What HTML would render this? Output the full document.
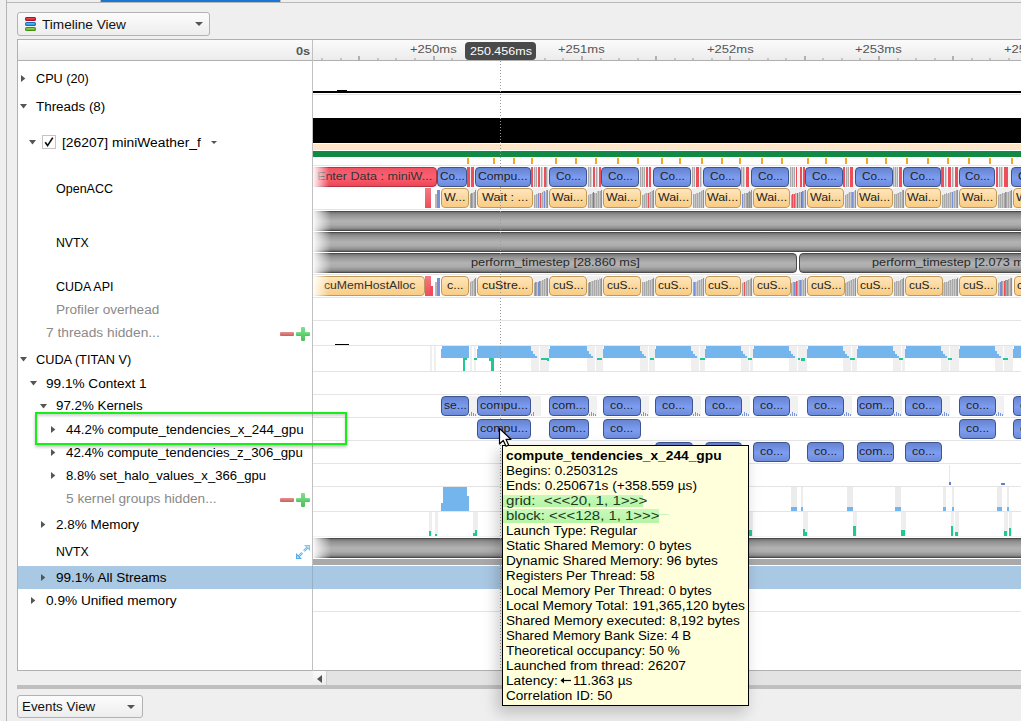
<!DOCTYPE html>
<html><head><meta charset="utf-8"><style>
html,body{margin:0;padding:0;width:1021px;height:721px;overflow:hidden;background:#efefef}
body{position:relative;font-family:'Liberation Sans', sans-serif}
div{position:absolute;box-sizing:border-box}
.t{white-space:pre;transform-origin:0 0}
</style></head><body>
<div style="left:0px;top:0px;width:1021px;height:721px;background:#efefef"></div>
<div style="left:6px;top:0px;width:1px;height:721px;background:#b4b4b4"></div>
<div style="left:7px;top:2px;width:1014px;height:1px;background:#b9b9b9"></div>
<div style="left:100px;top:0px;width:181px;height:2px;background:#1976d2"></div>
<div style="left:100px;top:0px;width:1px;height:3px;background:#b9b9b9"></div>
<div style="left:280px;top:0px;width:1px;height:3px;background:#b9b9b9"></div>
<div style="left:17px;top:12px;width:193px;height:24px;box-sizing:border-box;border:1px solid #b2b2b2;border-radius:3px;background:linear-gradient(#fcfcfc,#ededed)"></div>
<div style="left:25px;top:17px;width:12px;height:15px"><div style="left:0;top:0;width:11px;height:4px;border-radius:2px;background:linear-gradient(#f0606a,#d4101e);box-shadow:inset 0 0 0 1px #b01020"></div><div style="left:0;top:5px;width:11px;height:4px;border-radius:2px;background:linear-gradient(#70c8f0,#1a8ad8);box-shadow:inset 0 0 0 1px #1070b8"></div><div style="left:0;top:10px;width:11px;height:4px;border-radius:2px;background:linear-gradient(#a8e070,#50a820);box-shadow:inset 0 0 0 1px #409010"></div></div>
<div class="t" style="left:42.00px;top:19px;font-size:12px;line-height:12px;color:#111;transform:scaleX(1.1339);">Timeline View</div>
<div style="left:195px;top:22px;width:0;height:0;border-left:4px solid transparent;border-right:4px solid transparent;border-top:4px solid #555"></div>
<div style="left:17px;top:39px;width:1004px;height:632px;box-sizing:border-box;border:1px solid #b0b0b0;border-right:none;background:#fff"></div>
<div style="left:18px;top:40px;width:1003px;height:20px;background:linear-gradient(#fbfbfb,#ececec)"></div>
<div style="left:17px;top:60px;width:1004px;height:1px;background:#b0b0b0"></div>
<div style="left:312px;top:40px;width:1px;height:631px;background:#c0c0c0"></div>
<div class="t" style="left:295.80px;top:46px;font-size:11px;line-height:11px;color:#555;font-weight:bold;transform:scaleX(1.1593);">0s</div>
<div style="left:321px;top:58px;width:2px;height:2px;background:#c4c4c4"></div>
<div style="left:340px;top:58px;width:2px;height:2px;background:#c4c4c4"></div>
<div style="left:358px;top:56px;width:2px;height:4px;background:#b0b0b0"></div>
<div style="left:377px;top:58px;width:2px;height:2px;background:#c4c4c4"></div>
<div style="left:395px;top:58px;width:2px;height:2px;background:#c4c4c4"></div>
<div style="left:414px;top:58px;width:2px;height:2px;background:#c4c4c4"></div>
<div style="left:433px;top:56px;width:2px;height:4px;background:#b0b0b0"></div>
<div style="left:451px;top:58px;width:2px;height:2px;background:#c4c4c4"></div>
<div style="left:470px;top:58px;width:2px;height:2px;background:#c4c4c4"></div>
<div style="left:488px;top:58px;width:2px;height:2px;background:#c4c4c4"></div>
<div style="left:507px;top:56px;width:2px;height:4px;background:#b0b0b0"></div>
<div style="left:525px;top:58px;width:2px;height:2px;background:#c4c4c4"></div>
<div style="left:544px;top:58px;width:2px;height:2px;background:#c4c4c4"></div>
<div style="left:562px;top:58px;width:2px;height:2px;background:#c4c4c4"></div>
<div style="left:581px;top:56px;width:2px;height:4px;background:#b0b0b0"></div>
<div style="left:600px;top:58px;width:2px;height:2px;background:#c4c4c4"></div>
<div style="left:618px;top:58px;width:2px;height:2px;background:#c4c4c4"></div>
<div style="left:637px;top:58px;width:2px;height:2px;background:#c4c4c4"></div>
<div style="left:655px;top:56px;width:2px;height:4px;background:#b0b0b0"></div>
<div style="left:674px;top:58px;width:2px;height:2px;background:#c4c4c4"></div>
<div style="left:692px;top:58px;width:2px;height:2px;background:#c4c4c4"></div>
<div style="left:711px;top:58px;width:2px;height:2px;background:#c4c4c4"></div>
<div style="left:729px;top:56px;width:2px;height:4px;background:#b0b0b0"></div>
<div style="left:748px;top:58px;width:2px;height:2px;background:#c4c4c4"></div>
<div style="left:767px;top:58px;width:2px;height:2px;background:#c4c4c4"></div>
<div style="left:785px;top:58px;width:2px;height:2px;background:#c4c4c4"></div>
<div style="left:804px;top:56px;width:2px;height:4px;background:#b0b0b0"></div>
<div style="left:822px;top:58px;width:2px;height:2px;background:#c4c4c4"></div>
<div style="left:841px;top:58px;width:2px;height:2px;background:#c4c4c4"></div>
<div style="left:859px;top:58px;width:2px;height:2px;background:#c4c4c4"></div>
<div style="left:878px;top:56px;width:2px;height:4px;background:#b0b0b0"></div>
<div style="left:897px;top:58px;width:2px;height:2px;background:#c4c4c4"></div>
<div style="left:915px;top:58px;width:2px;height:2px;background:#c4c4c4"></div>
<div style="left:934px;top:58px;width:2px;height:2px;background:#c4c4c4"></div>
<div style="left:952px;top:56px;width:2px;height:4px;background:#b0b0b0"></div>
<div style="left:971px;top:58px;width:2px;height:2px;background:#c4c4c4"></div>
<div style="left:989px;top:58px;width:2px;height:2px;background:#c4c4c4"></div>
<div style="left:1008px;top:58px;width:2px;height:2px;background:#c4c4c4"></div>
<div class="t" style="left:409.67px;top:44px;font-size:11px;line-height:11px;color:#555;transform:scaleX(1.1826);">+250ms</div>
<div class="t" style="left:558.17px;top:44px;font-size:11px;line-height:11px;color:#555;transform:scaleX(1.1826);">+251ms</div>
<div class="t" style="left:706.67px;top:44px;font-size:11px;line-height:11px;color:#555;transform:scaleX(1.1826);">+252ms</div>
<div class="t" style="left:855.17px;top:44px;font-size:11px;line-height:11px;color:#555;transform:scaleX(1.1826);">+253ms</div>
<div class="t" style="left:1003.67px;top:44px;font-size:11px;line-height:11px;color:#555;transform:scaleX(1.1826);">+254ms</div>
<div style="left:465px;top:42px;width:71px;height:18px;background:#4a4a4a;border-radius:4px"></div>
<div class="t" style="left:469.53px;top:46px;font-size:11px;line-height:11px;color:#fff;transform:scaleX(1.1377);">250.456ms</div>
<svg style="position:absolute;left:21px;top:75px" width="6" height="8"><path d="M0 0 L4.3 3.5 L0 7 Z" fill="#555"/></svg>
<div class="t" style="left:36.00px;top:73px;font-size:12px;line-height:12px;color:#000;transform:scaleX(1.0566);">CPU (20)</div>
<svg style="position:absolute;left:20px;top:104px" width="8" height="6"><path d="M0 0 L7 0 L3.5 4.5 Z" fill="#555"/></svg>
<div class="t" style="left:36.00px;top:101px;font-size:12px;line-height:12px;color:#000;transform:scaleX(1.1170);">Threads (8)</div>
<svg style="position:absolute;left:29px;top:140px" width="8" height="6"><path d="M0 0 L7 0 L3.5 4.5 Z" fill="#555"/></svg>
<div style="left:42px;top:135px;width:14px;height:14px;border:1px solid #c4c4c4;background:#fff"></div>
<svg style="position:absolute;left:43px;top:136px" width="12" height="12"><path d="M2.2 6.2 L4.6 9.6 L9.8 1.6" fill="none" stroke="#111" stroke-width="1.7"/></svg>
<div class="t" style="left:62.00px;top:137px;font-size:12px;line-height:12px;color:#000;transform:scaleX(1.1514);">[26207] miniWeather_f</div>
<div style="left:211px;top:141px;width:0;height:0;border-left:3px solid transparent;border-right:3px solid transparent;border-top:3px solid #555"></div>
<div class="t" style="left:56.00px;top:183px;font-size:12px;line-height:12px;color:#000;transform:scaleX(1.0423);">OpenACC</div>
<div class="t" style="left:56.00px;top:237px;font-size:12px;line-height:12px;color:#000;transform:scaleX(1.0225);">NVTX</div>
<div class="t" style="left:56.00px;top:281px;font-size:12px;line-height:12px;color:#000;transform:scaleX(1.0370);">CUDA API</div>
<div class="t" style="left:56.00px;top:304px;font-size:12px;line-height:12px;color:#8a8a8a;transform:scaleX(1.1298);">Profiler overhead</div>
<div class="t" style="left:46.00px;top:327px;font-size:12px;line-height:12px;color:#8a8a8a;transform:scaleX(1.1440);">7 threads hidden...</div>
<div style="left:280px;top:332px;width:14px;height:4px;background:linear-gradient(#e89090,#c86060);border-radius:1px"></div>
<div style="left:296px;top:332px;width:14px;height:4px;background:linear-gradient(#80e090,#48c058);border-radius:1px"></div>
<div style="left:301px;top:327px;width:4px;height:14px;background:linear-gradient(#80e090,#48c058);border-radius:1px"></div>
<svg style="position:absolute;left:20px;top:357px" width="8" height="6"><path d="M0 0 L7 0 L3.5 4.5 Z" fill="#555"/></svg>
<div class="t" style="left:36.00px;top:354px;font-size:12px;line-height:12px;color:#000;transform:scaleX(1.0603);">CUDA (TITAN V)</div>
<svg style="position:absolute;left:30px;top:381px" width="8" height="6"><path d="M0 0 L7 0 L3.5 4.5 Z" fill="#555"/></svg>
<div class="t" style="left:46.00px;top:378px;font-size:12px;line-height:12px;color:#000;transform:scaleX(1.1338);">99.1% Context 1</div>
<svg style="position:absolute;left:40px;top:404px" width="8" height="6"><path d="M0 0 L7 0 L3.5 4.5 Z" fill="#555"/></svg>
<div class="t" style="left:56.00px;top:400px;font-size:12px;line-height:12px;color:#000;transform:scaleX(1.1108);">97.2% Kernels</div>
<svg style="position:absolute;left:51px;top:426px" width="6" height="8"><path d="M0 0 L4.3 3.5 L0 7 Z" fill="#555"/></svg>
<div class="t" style="left:66.00px;top:424px;font-size:12px;line-height:12px;color:#000;transform:scaleX(1.1093);">44.2% compute_tendencies_x_244_gpu</div>
<svg style="position:absolute;left:51px;top:449px" width="6" height="8"><path d="M0 0 L4.3 3.5 L0 7 Z" fill="#555"/></svg>
<div class="t" style="left:66.00px;top:447px;font-size:12px;line-height:12px;color:#000;transform:scaleX(1.1056);">42.4% compute_tendencies_z_306_gpu</div>
<svg style="position:absolute;left:51px;top:472px" width="6" height="8"><path d="M0 0 L4.3 3.5 L0 7 Z" fill="#555"/></svg>
<div class="t" style="left:66.00px;top:470px;font-size:12px;line-height:12px;color:#000;transform:scaleX(1.0908);">8.8% set_halo_values_x_366_gpu</div>
<div class="t" style="left:66.00px;top:493px;font-size:12px;line-height:12px;color:#8a8a8a;transform:scaleX(1.1404);">5 kernel groups hidden...</div>
<div style="left:280px;top:498px;width:14px;height:4px;background:linear-gradient(#e89090,#c86060);border-radius:1px"></div>
<div style="left:296px;top:498px;width:14px;height:4px;background:linear-gradient(#80e090,#48c058);border-radius:1px"></div>
<div style="left:301px;top:493px;width:4px;height:14px;background:linear-gradient(#80e090,#48c058);border-radius:1px"></div>
<svg style="position:absolute;left:41px;top:521px" width="6" height="8"><path d="M0 0 L4.3 3.5 L0 7 Z" fill="#555"/></svg>
<div class="t" style="left:56.00px;top:519px;font-size:12px;line-height:12px;color:#000;transform:scaleX(1.1225);">2.8% Memory</div>
<div class="t" style="left:56.00px;top:546px;font-size:12px;line-height:12px;color:#000;transform:scaleX(1.0225);">NVTX</div>
<svg style="position:absolute;left:294px;top:543px" width="18" height="18"><g stroke="#62b6ec" stroke-width="2.4" stroke-linecap="butt"><path d="M3.5 14.5 L8.2 9.8"/><path d="M10 8 L14.5 3.5"/></g><g stroke="#b4e2fa" stroke-width="0.9"><path d="M3.5 14.5 L8.2 9.8"/><path d="M10 8 L14.5 3.5"/></g><path d="M2 16 L2 10 L8 16 Z" fill="#56aee8"/><path d="M16 2 L10 2 L16 8 Z" fill="#7cc6f2"/><path d="M3 15 L3 12.5 L5.5 15 Z" fill="#a8dcf8"/><path d="M15 3 L12.5 3 L15 5.5 Z" fill="#c4e8fb"/></svg>
<div style="left:18px;top:566px;width:1003px;height:23px;background:#a9c8e3"></div>
<div style="left:312px;top:566px;width:1px;height:23px;background:#98b0c6"></div>
<svg style="position:absolute;left:41px;top:574px" width="6" height="8"><path d="M0 0 L4.3 3.5 L0 7 Z" fill="#555"/></svg>
<div class="t" style="left:56.00px;top:572px;font-size:12px;line-height:12px;color:#000;transform:scaleX(1.1276);">99.1% All Streams</div>
<svg style="position:absolute;left:31px;top:597px" width="6" height="8"><path d="M0 0 L4.3 3.5 L0 7 Z" fill="#555"/></svg>
<div class="t" style="left:46.00px;top:595px;font-size:12px;line-height:12px;color:#000;transform:scaleX(1.1379);">0.9% Unified memory</div>
<div style="left:0;top:0;width:1021px;height:721px;clip-path:inset(61px 0 50px 313px)">
<div style="left:313px;top:94px;width:708px;height:1px;background:#e4e4e4"></div>
<div style="left:313px;top:165px;width:708px;height:1px;background:#e4e4e4"></div>
<div style="left:313px;top:209px;width:708px;height:1px;background:#e4e4e4"></div>
<div style="left:313px;top:274px;width:708px;height:1px;background:#e4e4e4"></div>
<div style="left:313px;top:297px;width:708px;height:1px;background:#e4e4e4"></div>
<div style="left:313px;top:320px;width:708px;height:1px;background:#e4e4e4"></div>
<div style="left:313px;top:345px;width:708px;height:1px;background:#e4e4e4"></div>
<div style="left:313px;top:371px;width:708px;height:1px;background:#e4e4e4"></div>
<div style="left:313px;top:394px;width:708px;height:1px;background:#e4e4e4"></div>
<div style="left:313px;top:417px;width:708px;height:1px;background:#e4e4e4"></div>
<div style="left:313px;top:440px;width:708px;height:1px;background:#e4e4e4"></div>
<div style="left:313px;top:463px;width:708px;height:1px;background:#e4e4e4"></div>
<div style="left:313px;top:486px;width:708px;height:1px;background:#e4e4e4"></div>
<div style="left:313px;top:511px;width:708px;height:1px;background:#e4e4e4"></div>
<div style="left:313px;top:611px;width:708px;height:1px;background:#e4e4e4"></div>
<div style="left:313px;top:536px;width:708px;height:1px;background:#f4f4f4"></div>
<div style="left:313px;top:91px;width:708px;height:2px;background:#000"></div>
<div style="left:337px;top:90px;width:10px;height:1px;background:#000"></div>
<div style="left:313px;top:118px;width:708px;height:25px;background:#000"></div>
<div style="left:313px;top:144px;width:708px;height:6px;background:#fde6c8"></div>
<div style="left:313px;top:151px;width:708px;height:6px;background:#138a43"></div>
<div style="left:467px;top:158px;width:2px;height:6px;background:#f5a623"></div>
<div style="left:493px;top:158px;width:2px;height:6px;background:#f5a623"></div>
<div style="left:513px;top:158px;width:2px;height:6px;background:#f5a623"></div>
<div style="left:531px;top:158px;width:2px;height:6px;background:#f5a623"></div>
<div style="left:555px;top:158px;width:2px;height:6px;background:#f5a623"></div>
<div style="left:575px;top:158px;width:2px;height:6px;background:#f5a623"></div>
<div style="left:595px;top:158px;width:2px;height:6px;background:#f5a623"></div>
<div style="left:617px;top:158px;width:2px;height:6px;background:#f5a623"></div>
<div style="left:637px;top:158px;width:2px;height:6px;background:#f5a623"></div>
<div style="left:661px;top:158px;width:2px;height:6px;background:#f5a623"></div>
<div style="left:679px;top:158px;width:2px;height:6px;background:#f5a623"></div>
<div style="left:701px;top:158px;width:2px;height:6px;background:#f5a623"></div>
<div style="left:721px;top:158px;width:2px;height:6px;background:#f5a623"></div>
<div style="left:739px;top:158px;width:2px;height:6px;background:#f5a623"></div>
<div style="left:761px;top:158px;width:2px;height:6px;background:#f5a623"></div>
<div style="left:781px;top:158px;width:2px;height:6px;background:#f5a623"></div>
<div style="left:807px;top:158px;width:2px;height:6px;background:#f5a623"></div>
<div style="left:825px;top:158px;width:2px;height:6px;background:#f5a623"></div>
<div style="left:845px;top:158px;width:2px;height:6px;background:#f5a623"></div>
<div style="left:866px;top:158px;width:2px;height:6px;background:#f5a623"></div>
<div style="left:885px;top:158px;width:2px;height:6px;background:#f5a623"></div>
<div style="left:906px;top:158px;width:2px;height:6px;background:#f5a623"></div>
<div style="left:927px;top:158px;width:2px;height:6px;background:#f5a623"></div>
<div style="left:947px;top:158px;width:2px;height:6px;background:#f5a623"></div>
<div style="left:968px;top:158px;width:2px;height:6px;background:#f5a623"></div>
<div style="left:989px;top:158px;width:2px;height:6px;background:#f5a623"></div>
<div style="left:1011px;top:158px;width:2px;height:6px;background:#f5a623"></div>
<div style="left:313px;top:167px;width:708px;height:20px;background:#f3f3f3"></div>
<div style="left:310px;top:167px;width:127px;height:20px;border:1px solid #b03444;border-radius:4px;background:linear-gradient(#f05464,#fc6070 50%,#ec4656)"></div>
<div class="t" style="left:317.42px;top:171px;font-size:11px;line-height:11px;color:#333;transform:scaleX(1.1415);">Enter Data : miniW...</div>
<div style="left:313px;top:167px;width:16px;height:20px;background:linear-gradient(to right,rgba(255,255,255,0.95),rgba(255,255,255,0))"></div>
<div style="left:467px;top:167px;width:3px;height:20px;background:#ee4d5a"></div>
<div style="left:471px;top:167px;width:3px;height:20px;background:#ee4d5a"></div>
<div style="left:531px;top:167px;width:2px;height:20px;background:#ee4d5a"></div>
<div style="left:534px;top:167px;width:3px;height:20px;background:repeating-linear-gradient(to right,#a8a8a8 0 1px,#d4d4d4 1px 2px)"></div>
<div style="left:538px;top:167px;width:2px;height:20px;background:#ee4d5a"></div>
<div style="left:541px;top:167px;width:2px;height:20px;background:repeating-linear-gradient(to right,#a8a8a8 0 1px,#d4d4d4 1px 2px)"></div>
<div style="left:544px;top:167px;width:2px;height:20px;background:#ee4d5a"></div>
<div style="left:546px;top:167px;width:2px;height:20px;background:repeating-linear-gradient(to right,#a8a8a8 0 1px,#d4d4d4 1px 2px)"></div>
<div style="left:588px;top:167px;width:4px;height:20px;background:repeating-linear-gradient(to right,#a8a8a8 0 1px,#d4d4d4 1px 2px)"></div>
<div style="left:593px;top:167px;width:2px;height:20px;background:#ee4d5a"></div>
<div style="left:596px;top:167px;width:2px;height:20px;background:repeating-linear-gradient(to right,#a8a8a8 0 1px,#d4d4d4 1px 2px)"></div>
<div style="left:599px;top:167px;width:2px;height:20px;background:#ee4d5a"></div>
<div style="left:640px;top:167px;width:5px;height:20px;background:repeating-linear-gradient(to right,#a8a8a8 0 1px,#d4d4d4 1px 2px)"></div>
<div style="left:646px;top:167px;width:2px;height:20px;background:#ee4d5a"></div>
<div style="left:649px;top:167px;width:2px;height:20px;background:#ee4d5a"></div>
<div style="left:692px;top:167px;width:3px;height:20px;background:repeating-linear-gradient(to right,#a8a8a8 0 1px,#d4d4d4 1px 2px)"></div>
<div style="left:696px;top:167px;width:3px;height:20px;background:#ee4d5a"></div>
<div style="left:700px;top:167px;width:2px;height:20px;background:repeating-linear-gradient(to right,#a8a8a8 0 1px,#d4d4d4 1px 2px)"></div>
<div style="left:741px;top:167px;width:4px;height:20px;background:repeating-linear-gradient(to right,#a8a8a8 0 1px,#d4d4d4 1px 2px)"></div>
<div style="left:746px;top:167px;width:3px;height:20px;background:#ee4d5a"></div>
<div style="left:790px;top:167px;width:5px;height:20px;background:repeating-linear-gradient(to right,#a8a8a8 0 1px,#d4d4d4 1px 2px)"></div>
<div style="left:796px;top:167px;width:1px;height:20px;background:#ee4d5a"></div>
<div style="left:800px;top:167px;width:2px;height:20px;background:#ee4d5a"></div>
<div style="left:803px;top:167px;width:2px;height:20px;background:#ee4d5a"></div>
<div style="left:843px;top:167px;width:2px;height:20px;background:#ee4d5a"></div>
<div style="left:846px;top:167px;width:3px;height:20px;background:repeating-linear-gradient(to right,#a8a8a8 0 1px,#d4d4d4 1px 2px)"></div>
<div style="left:850px;top:167px;width:3px;height:20px;background:#ee4d5a"></div>
<div style="left:893px;top:167px;width:5px;height:20px;background:repeating-linear-gradient(to right,#a8a8a8 0 1px,#d4d4d4 1px 2px)"></div>
<div style="left:899px;top:167px;width:3px;height:20px;background:#ee4d5a"></div>
<div style="left:941px;top:167px;width:3px;height:20px;background:#ee4d5a"></div>
<div style="left:945px;top:167px;width:2px;height:20px;background:repeating-linear-gradient(to right,#a8a8a8 0 1px,#d4d4d4 1px 2px)"></div>
<div style="left:948px;top:167px;width:3px;height:20px;background:#ee4d5a"></div>
<div style="left:952px;top:167px;width:2px;height:20px;background:repeating-linear-gradient(to right,#a8a8a8 0 1px,#d4d4d4 1px 2px)"></div>
<div style="left:955px;top:167px;width:3px;height:20px;background:#ee4d5a"></div>
<div style="left:996px;top:167px;width:2px;height:20px;background:#ee4d5a"></div>
<div style="left:999px;top:167px;width:4px;height:20px;background:repeating-linear-gradient(to right,#a8a8a8 0 1px,#d4d4d4 1px 2px)"></div>
<div style="left:1004px;top:167px;width:4px;height:20px;background:#ee4d5a"></div>
<div style="left:437px;top:167px;width:30px;height:20px;border:1px solid #3c5591;border-radius:4px;background:linear-gradient(#6683cf,#7d9df2 55%,#6e8bd9)"></div>
<div class="t" style="left:439.55px;top:171px;font-size:11px;line-height:11px;color:#222;transform:scaleX(1.0717);">Co...</div>
<div style="left:475px;top:167px;width:56px;height:20px;border:1px solid #3c5591;border-radius:4px;background:linear-gradient(#6683cf,#7d9df2 55%,#6e8bd9)"></div>
<div class="t" style="left:478.22px;top:171px;font-size:11px;line-height:11px;color:#222;transform:scaleX(1.1104);">Compu...</div>
<div style="left:549px;top:167px;width:38px;height:20px;border:1px solid #3c5591;border-radius:4px;background:linear-gradient(#6683cf,#7d9df2 55%,#6e8bd9)"></div>
<div class="t" style="left:555.55px;top:171px;font-size:11px;line-height:11px;color:#222;transform:scaleX(1.0717);">Co...</div>
<div style="left:601px;top:167px;width:38px;height:20px;border:1px solid #3c5591;border-radius:4px;background:linear-gradient(#6683cf,#7d9df2 55%,#6e8bd9)"></div>
<div class="t" style="left:607.55px;top:171px;font-size:11px;line-height:11px;color:#222;transform:scaleX(1.0717);">Co...</div>
<div style="left:653px;top:167px;width:38px;height:20px;border:1px solid #3c5591;border-radius:4px;background:linear-gradient(#6683cf,#7d9df2 55%,#6e8bd9)"></div>
<div class="t" style="left:659.55px;top:171px;font-size:11px;line-height:11px;color:#222;transform:scaleX(1.0717);">Co...</div>
<div style="left:703px;top:167px;width:38px;height:20px;border:1px solid #3c5591;border-radius:4px;background:linear-gradient(#6683cf,#7d9df2 55%,#6e8bd9)"></div>
<div class="t" style="left:709.55px;top:171px;font-size:11px;line-height:11px;color:#222;transform:scaleX(1.0717);">Co...</div>
<div style="left:751px;top:167px;width:38px;height:20px;border:1px solid #3c5591;border-radius:4px;background:linear-gradient(#6683cf,#7d9df2 55%,#6e8bd9)"></div>
<div class="t" style="left:757.55px;top:171px;font-size:11px;line-height:11px;color:#222;transform:scaleX(1.0717);">Co...</div>
<div style="left:805px;top:167px;width:38px;height:20px;border:1px solid #3c5591;border-radius:4px;background:linear-gradient(#6683cf,#7d9df2 55%,#6e8bd9)"></div>
<div class="t" style="left:811.55px;top:171px;font-size:11px;line-height:11px;color:#222;transform:scaleX(1.0717);">Co...</div>
<div style="left:855px;top:167px;width:38px;height:20px;border:1px solid #3c5591;border-radius:4px;background:linear-gradient(#6683cf,#7d9df2 55%,#6e8bd9)"></div>
<div class="t" style="left:861.55px;top:171px;font-size:11px;line-height:11px;color:#222;transform:scaleX(1.0717);">Co...</div>
<div style="left:903px;top:167px;width:38px;height:20px;border:1px solid #3c5591;border-radius:4px;background:linear-gradient(#6683cf,#7d9df2 55%,#6e8bd9)"></div>
<div class="t" style="left:909.55px;top:171px;font-size:11px;line-height:11px;color:#222;transform:scaleX(1.0717);">Co...</div>
<div style="left:959px;top:167px;width:36px;height:20px;border:1px solid #3c5591;border-radius:4px;background:linear-gradient(#6683cf,#7d9df2 55%,#6e8bd9)"></div>
<div class="t" style="left:964.55px;top:171px;font-size:11px;line-height:11px;color:#222;transform:scaleX(1.0717);">Co...</div>
<div style="left:1011px;top:167px;width:39px;height:20px;border:1px solid #3c5591;border-radius:4px;background:linear-gradient(#6683cf,#7d9df2 55%,#6e8bd9)"></div>
<div class="t" style="left:1018.05px;top:171px;font-size:11px;line-height:11px;color:#222;transform:scaleX(1.0717);">Co...</div>
<div style="left:425px;top:188px;width:6px;height:20px;background:linear-gradient(#f27a84,#ee4d5a)"></div>
<div style="left:435px;top:194px;width:2px;height:14px;background:#b8b8b8"></div>
<div style="left:437px;top:190px;width:3px;height:18px;background:#7890d8"></div>
<div style="left:469px;top:188px;width:8px;height:20px;background:#efefef"></div>
<div style="left:470px;top:194px;width:1px;height:14px;background:#a9a9a9"></div>
<div style="left:471px;top:193px;width:1px;height:15px;background:#7890d8"></div>
<div style="left:472px;top:193px;width:1px;height:15px;background:#a9a9a9"></div>
<div style="left:473px;top:192px;width:1px;height:16px;background:#c9c9c9"></div>
<div style="left:474px;top:192px;width:1px;height:16px;background:#a9a9a9"></div>
<div style="left:475px;top:191px;width:1px;height:17px;background:#ee4d5a"></div>
<div style="left:475px;top:190px;width:1px;height:18px;background:#7890d8"></div>
<div style="left:533px;top:188px;width:16px;height:20px;background:#efefef"></div>
<div style="left:534px;top:195px;width:1px;height:13px;background:#a9a9a9"></div>
<div style="left:535px;top:195px;width:1px;height:13px;background:#c9c9c9"></div>
<div style="left:536px;top:194px;width:1px;height:14px;background:#a9a9a9"></div>
<div style="left:537px;top:194px;width:1px;height:14px;background:#c9c9c9"></div>
<div style="left:538px;top:193px;width:1px;height:15px;background:#7890d8"></div>
<div style="left:539px;top:193px;width:1px;height:15px;background:#c9c9c9"></div>
<div style="left:540px;top:193px;width:1px;height:15px;background:#ee4d5a"></div>
<div style="left:541px;top:193px;width:1px;height:15px;background:#c9c9c9"></div>
<div style="left:542px;top:192px;width:1px;height:16px;background:#a9a9a9"></div>
<div style="left:543px;top:191px;width:1px;height:17px;background:#c9c9c9"></div>
<div style="left:544px;top:191px;width:1px;height:17px;background:#7890d8"></div>
<div style="left:545px;top:192px;width:1px;height:16px;background:#c9c9c9"></div>
<div style="left:546px;top:190px;width:1px;height:18px;background:#a9a9a9"></div>
<div style="left:547px;top:191px;width:1px;height:17px;background:#c9c9c9"></div>
<div style="left:547px;top:190px;width:1px;height:18px;background:#7890d8"></div>
<div style="left:587px;top:188px;width:16px;height:20px;background:#efefef"></div>
<div style="left:588px;top:195px;width:1px;height:13px;background:#a9a9a9"></div>
<div style="left:589px;top:194px;width:1px;height:14px;background:#c9c9c9"></div>
<div style="left:590px;top:194px;width:1px;height:14px;background:#a9a9a9"></div>
<div style="left:591px;top:194px;width:1px;height:14px;background:#c9c9c9"></div>
<div style="left:592px;top:193px;width:1px;height:15px;background:#a9a9a9"></div>
<div style="left:593px;top:192px;width:1px;height:16px;background:#ee4d5a"></div>
<div style="left:594px;top:193px;width:1px;height:15px;background:#a9a9a9"></div>
<div style="left:595px;top:193px;width:1px;height:15px;background:#c9c9c9"></div>
<div style="left:596px;top:193px;width:1px;height:15px;background:#a9a9a9"></div>
<div style="left:597px;top:191px;width:1px;height:17px;background:#c9c9c9"></div>
<div style="left:598px;top:191px;width:1px;height:17px;background:#a9a9a9"></div>
<div style="left:599px;top:191px;width:1px;height:17px;background:#c9c9c9"></div>
<div style="left:600px;top:191px;width:1px;height:17px;background:#a9a9a9"></div>
<div style="left:601px;top:190px;width:1px;height:18px;background:#c9c9c9"></div>
<div style="left:601px;top:190px;width:1px;height:18px;background:#7890d8"></div>
<div style="left:641px;top:188px;width:14px;height:20px;background:#efefef"></div>
<div style="left:642px;top:195px;width:1px;height:13px;background:#a9a9a9"></div>
<div style="left:643px;top:195px;width:1px;height:13px;background:#c9c9c9"></div>
<div style="left:644px;top:194px;width:1px;height:14px;background:#a9a9a9"></div>
<div style="left:645px;top:193px;width:1px;height:15px;background:#c9c9c9"></div>
<div style="left:646px;top:193px;width:1px;height:15px;background:#a9a9a9"></div>
<div style="left:647px;top:193px;width:1px;height:15px;background:#c9c9c9"></div>
<div style="left:648px;top:193px;width:1px;height:15px;background:#ee4d5a"></div>
<div style="left:649px;top:192px;width:1px;height:16px;background:#c9c9c9"></div>
<div style="left:650px;top:192px;width:1px;height:16px;background:#a9a9a9"></div>
<div style="left:651px;top:191px;width:1px;height:17px;background:#c9c9c9"></div>
<div style="left:652px;top:191px;width:1px;height:17px;background:#a9a9a9"></div>
<div style="left:653px;top:190px;width:1px;height:18px;background:#c9c9c9"></div>
<div style="left:653px;top:190px;width:1px;height:18px;background:#7890d8"></div>
<div style="left:692px;top:188px;width:13px;height:20px;background:#efefef"></div>
<div style="left:693px;top:194px;width:1px;height:14px;background:#a9a9a9"></div>
<div style="left:694px;top:194px;width:1px;height:14px;background:#c9c9c9"></div>
<div style="left:695px;top:194px;width:1px;height:14px;background:#a9a9a9"></div>
<div style="left:696px;top:193px;width:1px;height:15px;background:#c9c9c9"></div>
<div style="left:697px;top:193px;width:1px;height:15px;background:#a9a9a9"></div>
<div style="left:698px;top:193px;width:1px;height:15px;background:#c9c9c9"></div>
<div style="left:699px;top:192px;width:1px;height:16px;background:#a9a9a9"></div>
<div style="left:700px;top:192px;width:1px;height:16px;background:#c9c9c9"></div>
<div style="left:701px;top:191px;width:1px;height:17px;background:#a9a9a9"></div>
<div style="left:702px;top:190px;width:1px;height:18px;background:#c9c9c9"></div>
<div style="left:703px;top:190px;width:1px;height:18px;background:#a9a9a9"></div>
<div style="left:703px;top:190px;width:1px;height:18px;background:#7890d8"></div>
<div style="left:741px;top:188px;width:12px;height:20px;background:#efefef"></div>
<div style="left:742px;top:194px;width:1px;height:14px;background:#7890d8"></div>
<div style="left:743px;top:194px;width:1px;height:14px;background:#c9c9c9"></div>
<div style="left:744px;top:193px;width:1px;height:15px;background:#a9a9a9"></div>
<div style="left:745px;top:193px;width:1px;height:15px;background:#c9c9c9"></div>
<div style="left:746px;top:193px;width:1px;height:15px;background:#a9a9a9"></div>
<div style="left:747px;top:193px;width:1px;height:15px;background:#7890d8"></div>
<div style="left:748px;top:192px;width:1px;height:16px;background:#a9a9a9"></div>
<div style="left:749px;top:191px;width:1px;height:17px;background:#7890d8"></div>
<div style="left:750px;top:192px;width:1px;height:16px;background:#a9a9a9"></div>
<div style="left:751px;top:191px;width:1px;height:17px;background:#c9c9c9"></div>
<div style="left:751px;top:190px;width:1px;height:18px;background:#7890d8"></div>
<div style="left:790px;top:188px;width:17px;height:20px;background:#efefef"></div>
<div style="left:791px;top:195px;width:1px;height:13px;background:#a9a9a9"></div>
<div style="left:792px;top:194px;width:1px;height:14px;background:#ee4d5a"></div>
<div style="left:793px;top:194px;width:1px;height:14px;background:#a9a9a9"></div>
<div style="left:794px;top:194px;width:1px;height:14px;background:#ee4d5a"></div>
<div style="left:795px;top:193px;width:1px;height:15px;background:#a9a9a9"></div>
<div style="left:796px;top:193px;width:1px;height:15px;background:#c9c9c9"></div>
<div style="left:797px;top:193px;width:1px;height:15px;background:#ee4d5a"></div>
<div style="left:798px;top:193px;width:1px;height:15px;background:#c9c9c9"></div>
<div style="left:799px;top:192px;width:1px;height:16px;background:#a9a9a9"></div>
<div style="left:800px;top:192px;width:1px;height:16px;background:#c9c9c9"></div>
<div style="left:801px;top:192px;width:1px;height:16px;background:#ee4d5a"></div>
<div style="left:802px;top:191px;width:1px;height:17px;background:#7890d8"></div>
<div style="left:803px;top:191px;width:1px;height:17px;background:#a9a9a9"></div>
<div style="left:804px;top:190px;width:1px;height:18px;background:#c9c9c9"></div>
<div style="left:805px;top:191px;width:1px;height:17px;background:#a9a9a9"></div>
<div style="left:805px;top:190px;width:1px;height:18px;background:#7890d8"></div>
<div style="left:844px;top:188px;width:13px;height:20px;background:#efefef"></div>
<div style="left:845px;top:195px;width:1px;height:13px;background:#a9a9a9"></div>
<div style="left:846px;top:194px;width:1px;height:14px;background:#c9c9c9"></div>
<div style="left:847px;top:194px;width:1px;height:14px;background:#a9a9a9"></div>
<div style="left:848px;top:193px;width:1px;height:15px;background:#c9c9c9"></div>
<div style="left:849px;top:192px;width:1px;height:16px;background:#a9a9a9"></div>
<div style="left:850px;top:192px;width:1px;height:16px;background:#c9c9c9"></div>
<div style="left:851px;top:192px;width:1px;height:16px;background:#a9a9a9"></div>
<div style="left:852px;top:192px;width:1px;height:16px;background:#7890d8"></div>
<div style="left:853px;top:192px;width:1px;height:16px;background:#a9a9a9"></div>
<div style="left:854px;top:191px;width:1px;height:17px;background:#c9c9c9"></div>
<div style="left:855px;top:190px;width:1px;height:18px;background:#a9a9a9"></div>
<div style="left:855px;top:190px;width:1px;height:18px;background:#7890d8"></div>
<div style="left:893px;top:188px;width:12px;height:20px;background:#efefef"></div>
<div style="left:894px;top:194px;width:1px;height:14px;background:#a9a9a9"></div>
<div style="left:895px;top:194px;width:1px;height:14px;background:#c9c9c9"></div>
<div style="left:896px;top:194px;width:1px;height:14px;background:#a9a9a9"></div>
<div style="left:897px;top:193px;width:1px;height:15px;background:#c9c9c9"></div>
<div style="left:898px;top:193px;width:1px;height:15px;background:#a9a9a9"></div>
<div style="left:899px;top:192px;width:1px;height:16px;background:#c9c9c9"></div>
<div style="left:900px;top:192px;width:1px;height:16px;background:#a9a9a9"></div>
<div style="left:901px;top:192px;width:1px;height:16px;background:#c9c9c9"></div>
<div style="left:902px;top:190px;width:1px;height:18px;background:#a9a9a9"></div>
<div style="left:903px;top:190px;width:1px;height:18px;background:#c9c9c9"></div>
<div style="left:903px;top:190px;width:1px;height:18px;background:#7890d8"></div>
<div style="left:941px;top:188px;width:18px;height:20px;background:#efefef"></div>
<div style="left:942px;top:195px;width:1px;height:13px;background:#a9a9a9"></div>
<div style="left:943px;top:195px;width:1px;height:13px;background:#c9c9c9"></div>
<div style="left:944px;top:194px;width:1px;height:14px;background:#a9a9a9"></div>
<div style="left:945px;top:194px;width:1px;height:14px;background:#c9c9c9"></div>
<div style="left:946px;top:193px;width:1px;height:15px;background:#a9a9a9"></div>
<div style="left:947px;top:194px;width:1px;height:14px;background:#c9c9c9"></div>
<div style="left:948px;top:193px;width:1px;height:15px;background:#a9a9a9"></div>
<div style="left:949px;top:193px;width:1px;height:15px;background:#c9c9c9"></div>
<div style="left:950px;top:192px;width:1px;height:16px;background:#a9a9a9"></div>
<div style="left:951px;top:192px;width:1px;height:16px;background:#c9c9c9"></div>
<div style="left:952px;top:192px;width:1px;height:16px;background:#7890d8"></div>
<div style="left:953px;top:191px;width:1px;height:17px;background:#c9c9c9"></div>
<div style="left:954px;top:191px;width:1px;height:17px;background:#a9a9a9"></div>
<div style="left:955px;top:191px;width:1px;height:17px;background:#c9c9c9"></div>
<div style="left:956px;top:190px;width:1px;height:18px;background:#a9a9a9"></div>
<div style="left:957px;top:191px;width:1px;height:17px;background:#c9c9c9"></div>
<div style="left:957px;top:190px;width:1px;height:18px;background:#7890d8"></div>
<div style="left:997px;top:188px;width:16px;height:20px;background:#efefef"></div>
<div style="left:998px;top:195px;width:1px;height:13px;background:#a9a9a9"></div>
<div style="left:999px;top:194px;width:1px;height:14px;background:#c9c9c9"></div>
<div style="left:1000px;top:194px;width:1px;height:14px;background:#a9a9a9"></div>
<div style="left:1001px;top:194px;width:1px;height:14px;background:#c9c9c9"></div>
<div style="left:1002px;top:193px;width:1px;height:15px;background:#a9a9a9"></div>
<div style="left:1003px;top:193px;width:1px;height:15px;background:#c9c9c9"></div>
<div style="left:1004px;top:193px;width:1px;height:15px;background:#a9a9a9"></div>
<div style="left:1005px;top:192px;width:1px;height:16px;background:#7890d8"></div>
<div style="left:1006px;top:192px;width:1px;height:16px;background:#a9a9a9"></div>
<div style="left:1007px;top:192px;width:1px;height:16px;background:#c9c9c9"></div>
<div style="left:1008px;top:192px;width:1px;height:16px;background:#a9a9a9"></div>
<div style="left:1009px;top:191px;width:1px;height:17px;background:#c9c9c9"></div>
<div style="left:1010px;top:191px;width:1px;height:17px;background:#a9a9a9"></div>
<div style="left:1011px;top:190px;width:1px;height:18px;background:#c9c9c9"></div>
<div style="left:1011px;top:190px;width:1px;height:18px;background:#7890d8"></div>
<div style="left:441px;top:188px;width:28px;height:20px;border:1px solid #c39a55;border-radius:4px;background:linear-gradient(#fee6bf,#fcd595 60%,#f9cd88)"></div>
<div class="t" style="left:444.32px;top:192px;font-size:11px;line-height:11px;color:#222;transform:scaleX(1.1273);">W...</div>
<div style="left:477px;top:188px;width:56px;height:20px;border:1px solid #c39a55;border-radius:4px;background:linear-gradient(#fee6bf,#fcd595 60%,#f9cd88)"></div>
<div class="t" style="left:481.91px;top:192px;font-size:11px;line-height:11px;color:#222;transform:scaleX(1.1562);">Wait : ...</div>
<div style="left:549px;top:188px;width:38px;height:20px;border:1px solid #c39a55;border-radius:4px;background:linear-gradient(#fee6bf,#fcd595 60%,#f9cd88)"></div>
<div class="t" style="left:552.42px;top:192px;font-size:11px;line-height:11px;color:#222;transform:scaleX(1.1243);">Wai...</div>
<div style="left:603px;top:188px;width:38px;height:20px;border:1px solid #c39a55;border-radius:4px;background:linear-gradient(#fee6bf,#fcd595 60%,#f9cd88)"></div>
<div class="t" style="left:606.42px;top:192px;font-size:11px;line-height:11px;color:#222;transform:scaleX(1.1243);">Wai...</div>
<div style="left:655px;top:188px;width:37px;height:20px;border:1px solid #c39a55;border-radius:4px;background:linear-gradient(#fee6bf,#fcd595 60%,#f9cd88)"></div>
<div class="t" style="left:657.92px;top:192px;font-size:11px;line-height:11px;color:#222;transform:scaleX(1.1243);">Wai...</div>
<div style="left:705px;top:188px;width:36px;height:20px;border:1px solid #c39a55;border-radius:4px;background:linear-gradient(#fee6bf,#fcd595 60%,#f9cd88)"></div>
<div class="t" style="left:707.42px;top:192px;font-size:11px;line-height:11px;color:#222;transform:scaleX(1.1243);">Wai...</div>
<div style="left:753px;top:188px;width:37px;height:20px;border:1px solid #c39a55;border-radius:4px;background:linear-gradient(#fee6bf,#fcd595 60%,#f9cd88)"></div>
<div class="t" style="left:755.92px;top:192px;font-size:11px;line-height:11px;color:#222;transform:scaleX(1.1243);">Wai...</div>
<div style="left:807px;top:188px;width:37px;height:20px;border:1px solid #c39a55;border-radius:4px;background:linear-gradient(#fee6bf,#fcd595 60%,#f9cd88)"></div>
<div class="t" style="left:809.92px;top:192px;font-size:11px;line-height:11px;color:#222;transform:scaleX(1.1243);">Wai...</div>
<div style="left:857px;top:188px;width:36px;height:20px;border:1px solid #c39a55;border-radius:4px;background:linear-gradient(#fee6bf,#fcd595 60%,#f9cd88)"></div>
<div class="t" style="left:859.42px;top:192px;font-size:11px;line-height:11px;color:#222;transform:scaleX(1.1243);">Wai...</div>
<div style="left:905px;top:188px;width:36px;height:20px;border:1px solid #c39a55;border-radius:4px;background:linear-gradient(#fee6bf,#fcd595 60%,#f9cd88)"></div>
<div class="t" style="left:907.42px;top:192px;font-size:11px;line-height:11px;color:#222;transform:scaleX(1.1243);">Wai...</div>
<div style="left:959px;top:188px;width:38px;height:20px;border:1px solid #c39a55;border-radius:4px;background:linear-gradient(#fee6bf,#fcd595 60%,#f9cd88)"></div>
<div class="t" style="left:962.42px;top:192px;font-size:11px;line-height:11px;color:#222;transform:scaleX(1.1243);">Wai...</div>
<div style="left:1013px;top:188px;width:37px;height:20px;border:1px solid #c39a55;border-radius:4px;background:linear-gradient(#fee6bf,#fcd595 60%,#f9cd88)"></div>
<div class="t" style="left:1015.92px;top:192px;font-size:11px;line-height:11px;color:#222;transform:scaleX(1.1243);">Wai...</div>
<div style="left:300px;top:211px;width:730px;height:20px;border:1px solid #4a4a4a;border-radius:4px;background:linear-gradient(#707070,#919191 15%,#b3b3b3 50%,#acacac 70%,#909090 90%,#666)"></div>
<div style="left:300px;top:232px;width:730px;height:20px;border:1px solid #4a4a4a;border-radius:4px;background:linear-gradient(#707070,#919191 15%,#b3b3b3 50%,#acacac 70%,#909090 90%,#666)"></div>
<div style="left:300px;top:253px;width:497px;height:20px;border:1px solid #4a4a4a;border-radius:4px;background:linear-gradient(#707070,#919191 15%,#b3b3b3 50%,#acacac 70%,#909090 90%,#666)"></div>
<div style="left:799px;top:253px;width:301px;height:20px;border:1px solid #4a4a4a;border-radius:4px;background:linear-gradient(#707070,#919191 15%,#b3b3b3 50%,#acacac 70%,#909090 90%,#666)"></div>
<div class="t" style="left:470.61px;top:257px;font-size:11px;line-height:11px;color:#2a2a2a;transform:scaleX(1.1550);">perform_timestep [28.860 ms]</div>
<div class="t" style="left:872.00px;top:257px;font-size:11px;line-height:11px;color:#2a2a2a;transform:scaleX(1.1554);">perform_timestep [2.073 ms]</div>
<div style="left:313px;top:211px;width:18px;height:62px;background:linear-gradient(to right,rgba(255,255,255,0.95),rgba(255,255,255,0))"></div>
<div style="left:300px;top:276px;width:125px;height:20px;border:1px solid #c39a55;border-radius:4px;background:linear-gradient(#fee6bf,#fcd595 60%,#f9cd88)"></div>
<div class="t" style="left:324.27px;top:280px;font-size:11px;line-height:11px;color:#333;transform:scaleX(1.1081);">cuMemHostAlloc</div>
<div style="left:313px;top:276px;width:16px;height:20px;background:linear-gradient(to right,rgba(255,255,255,0.95),rgba(255,255,255,0))"></div>
<div style="left:425px;top:276px;width:6px;height:20px;background:linear-gradient(#f27a84,#ee4d5a)"></div>
<div style="left:430px;top:286px;width:3px;height:10px;background:#ee4d5a"></div>
<div style="left:435px;top:282px;width:2px;height:14px;background:#b8b8b8"></div>
<div style="left:437px;top:278px;width:3px;height:18px;background:#7890d8"></div>
<div style="left:469px;top:276px;width:8px;height:20px;background:#efefef"></div>
<div style="left:470px;top:282px;width:1px;height:14px;background:#a9a9a9"></div>
<div style="left:471px;top:281px;width:1px;height:15px;background:#c9c9c9"></div>
<div style="left:472px;top:281px;width:1px;height:15px;background:#a9a9a9"></div>
<div style="left:473px;top:280px;width:1px;height:16px;background:#c9c9c9"></div>
<div style="left:474px;top:279px;width:1px;height:17px;background:#a9a9a9"></div>
<div style="left:475px;top:279px;width:1px;height:17px;background:#c9c9c9"></div>
<div style="left:475px;top:278px;width:1px;height:18px;background:#7890d8"></div>
<div style="left:533px;top:276px;width:16px;height:20px;background:#efefef"></div>
<div style="left:534px;top:283px;width:1px;height:13px;background:#a9a9a9"></div>
<div style="left:535px;top:282px;width:1px;height:14px;background:#7890d8"></div>
<div style="left:536px;top:282px;width:1px;height:14px;background:#a9a9a9"></div>
<div style="left:537px;top:282px;width:1px;height:14px;background:#c9c9c9"></div>
<div style="left:538px;top:282px;width:1px;height:14px;background:#7890d8"></div>
<div style="left:539px;top:281px;width:1px;height:15px;background:#7890d8"></div>
<div style="left:540px;top:281px;width:1px;height:15px;background:#a9a9a9"></div>
<div style="left:541px;top:281px;width:1px;height:15px;background:#c9c9c9"></div>
<div style="left:542px;top:280px;width:1px;height:16px;background:#a9a9a9"></div>
<div style="left:543px;top:280px;width:1px;height:16px;background:#c9c9c9"></div>
<div style="left:544px;top:279px;width:1px;height:17px;background:#a9a9a9"></div>
<div style="left:545px;top:279px;width:1px;height:17px;background:#c9c9c9"></div>
<div style="left:546px;top:278px;width:1px;height:18px;background:#a9a9a9"></div>
<div style="left:547px;top:278px;width:1px;height:18px;background:#c9c9c9"></div>
<div style="left:547px;top:278px;width:1px;height:18px;background:#7890d8"></div>
<div style="left:587px;top:276px;width:16px;height:20px;background:#efefef"></div>
<div style="left:588px;top:283px;width:1px;height:13px;background:#a9a9a9"></div>
<div style="left:589px;top:282px;width:1px;height:14px;background:#7890d8"></div>
<div style="left:590px;top:282px;width:1px;height:14px;background:#a9a9a9"></div>
<div style="left:591px;top:281px;width:1px;height:15px;background:#c9c9c9"></div>
<div style="left:592px;top:281px;width:1px;height:15px;background:#a9a9a9"></div>
<div style="left:593px;top:281px;width:1px;height:15px;background:#c9c9c9"></div>
<div style="left:594px;top:280px;width:1px;height:16px;background:#a9a9a9"></div>
<div style="left:595px;top:280px;width:1px;height:16px;background:#c9c9c9"></div>
<div style="left:596px;top:280px;width:1px;height:16px;background:#a9a9a9"></div>
<div style="left:597px;top:279px;width:1px;height:17px;background:#c9c9c9"></div>
<div style="left:598px;top:280px;width:1px;height:16px;background:#a9a9a9"></div>
<div style="left:599px;top:278px;width:1px;height:18px;background:#c9c9c9"></div>
<div style="left:600px;top:279px;width:1px;height:17px;background:#a9a9a9"></div>
<div style="left:601px;top:279px;width:1px;height:17px;background:#7890d8"></div>
<div style="left:601px;top:278px;width:1px;height:18px;background:#7890d8"></div>
<div style="left:641px;top:276px;width:14px;height:20px;background:#efefef"></div>
<div style="left:642px;top:282px;width:1px;height:14px;background:#a9a9a9"></div>
<div style="left:643px;top:282px;width:1px;height:14px;background:#c9c9c9"></div>
<div style="left:644px;top:282px;width:1px;height:14px;background:#a9a9a9"></div>
<div style="left:645px;top:282px;width:1px;height:14px;background:#c9c9c9"></div>
<div style="left:646px;top:281px;width:1px;height:15px;background:#a9a9a9"></div>
<div style="left:647px;top:281px;width:1px;height:15px;background:#c9c9c9"></div>
<div style="left:648px;top:280px;width:1px;height:16px;background:#a9a9a9"></div>
<div style="left:649px;top:280px;width:1px;height:16px;background:#c9c9c9"></div>
<div style="left:650px;top:280px;width:1px;height:16px;background:#a9a9a9"></div>
<div style="left:651px;top:279px;width:1px;height:17px;background:#c9c9c9"></div>
<div style="left:652px;top:279px;width:1px;height:17px;background:#a9a9a9"></div>
<div style="left:653px;top:279px;width:1px;height:17px;background:#c9c9c9"></div>
<div style="left:653px;top:278px;width:1px;height:18px;background:#7890d8"></div>
<div style="left:692px;top:276px;width:13px;height:20px;background:#efefef"></div>
<div style="left:693px;top:282px;width:1px;height:14px;background:#a9a9a9"></div>
<div style="left:694px;top:282px;width:1px;height:14px;background:#7890d8"></div>
<div style="left:695px;top:282px;width:1px;height:14px;background:#a9a9a9"></div>
<div style="left:696px;top:282px;width:1px;height:14px;background:#c9c9c9"></div>
<div style="left:697px;top:281px;width:1px;height:15px;background:#a9a9a9"></div>
<div style="left:698px;top:280px;width:1px;height:16px;background:#c9c9c9"></div>
<div style="left:699px;top:280px;width:1px;height:16px;background:#a9a9a9"></div>
<div style="left:700px;top:280px;width:1px;height:16px;background:#c9c9c9"></div>
<div style="left:701px;top:279px;width:1px;height:17px;background:#a9a9a9"></div>
<div style="left:702px;top:279px;width:1px;height:17px;background:#c9c9c9"></div>
<div style="left:703px;top:278px;width:1px;height:18px;background:#a9a9a9"></div>
<div style="left:703px;top:278px;width:1px;height:18px;background:#7890d8"></div>
<div style="left:741px;top:276px;width:12px;height:20px;background:#efefef"></div>
<div style="left:742px;top:283px;width:1px;height:13px;background:#a9a9a9"></div>
<div style="left:743px;top:282px;width:1px;height:14px;background:#c9c9c9"></div>
<div style="left:744px;top:282px;width:1px;height:14px;background:#ee4d5a"></div>
<div style="left:745px;top:282px;width:1px;height:14px;background:#c9c9c9"></div>
<div style="left:746px;top:281px;width:1px;height:15px;background:#a9a9a9"></div>
<div style="left:747px;top:280px;width:1px;height:16px;background:#c9c9c9"></div>
<div style="left:748px;top:280px;width:1px;height:16px;background:#a9a9a9"></div>
<div style="left:749px;top:280px;width:1px;height:16px;background:#c9c9c9"></div>
<div style="left:750px;top:279px;width:1px;height:17px;background:#a9a9a9"></div>
<div style="left:751px;top:278px;width:1px;height:18px;background:#c9c9c9"></div>
<div style="left:751px;top:278px;width:1px;height:18px;background:#7890d8"></div>
<div style="left:790px;top:276px;width:17px;height:20px;background:#efefef"></div>
<div style="left:791px;top:283px;width:1px;height:13px;background:#a9a9a9"></div>
<div style="left:792px;top:282px;width:1px;height:14px;background:#c9c9c9"></div>
<div style="left:793px;top:282px;width:1px;height:14px;background:#a9a9a9"></div>
<div style="left:794px;top:282px;width:1px;height:14px;background:#7890d8"></div>
<div style="left:795px;top:282px;width:1px;height:14px;background:#a9a9a9"></div>
<div style="left:796px;top:281px;width:1px;height:15px;background:#ee4d5a"></div>
<div style="left:797px;top:281px;width:1px;height:15px;background:#a9a9a9"></div>
<div style="left:798px;top:280px;width:1px;height:16px;background:#c9c9c9"></div>
<div style="left:799px;top:280px;width:1px;height:16px;background:#a9a9a9"></div>
<div style="left:800px;top:280px;width:1px;height:16px;background:#7890d8"></div>
<div style="left:801px;top:280px;width:1px;height:16px;background:#a9a9a9"></div>
<div style="left:802px;top:279px;width:1px;height:17px;background:#c9c9c9"></div>
<div style="left:803px;top:280px;width:1px;height:16px;background:#a9a9a9"></div>
<div style="left:804px;top:279px;width:1px;height:17px;background:#c9c9c9"></div>
<div style="left:805px;top:279px;width:1px;height:17px;background:#a9a9a9"></div>
<div style="left:805px;top:278px;width:1px;height:18px;background:#7890d8"></div>
<div style="left:844px;top:276px;width:13px;height:20px;background:#efefef"></div>
<div style="left:845px;top:283px;width:1px;height:13px;background:#a9a9a9"></div>
<div style="left:846px;top:282px;width:1px;height:14px;background:#c9c9c9"></div>
<div style="left:847px;top:282px;width:1px;height:14px;background:#a9a9a9"></div>
<div style="left:848px;top:281px;width:1px;height:15px;background:#c9c9c9"></div>
<div style="left:849px;top:281px;width:1px;height:15px;background:#a9a9a9"></div>
<div style="left:850px;top:280px;width:1px;height:16px;background:#c9c9c9"></div>
<div style="left:851px;top:280px;width:1px;height:16px;background:#a9a9a9"></div>
<div style="left:852px;top:279px;width:1px;height:17px;background:#c9c9c9"></div>
<div style="left:853px;top:279px;width:1px;height:17px;background:#a9a9a9"></div>
<div style="left:854px;top:279px;width:1px;height:17px;background:#c9c9c9"></div>
<div style="left:855px;top:279px;width:1px;height:17px;background:#a9a9a9"></div>
<div style="left:855px;top:278px;width:1px;height:18px;background:#7890d8"></div>
<div style="left:893px;top:276px;width:12px;height:20px;background:#efefef"></div>
<div style="left:894px;top:282px;width:1px;height:14px;background:#a9a9a9"></div>
<div style="left:895px;top:282px;width:1px;height:14px;background:#c9c9c9"></div>
<div style="left:896px;top:281px;width:1px;height:15px;background:#a9a9a9"></div>
<div style="left:897px;top:281px;width:1px;height:15px;background:#c9c9c9"></div>
<div style="left:898px;top:281px;width:1px;height:15px;background:#a9a9a9"></div>
<div style="left:899px;top:281px;width:1px;height:15px;background:#c9c9c9"></div>
<div style="left:900px;top:280px;width:1px;height:16px;background:#a9a9a9"></div>
<div style="left:901px;top:279px;width:1px;height:17px;background:#c9c9c9"></div>
<div style="left:902px;top:279px;width:1px;height:17px;background:#a9a9a9"></div>
<div style="left:903px;top:279px;width:1px;height:17px;background:#7890d8"></div>
<div style="left:903px;top:278px;width:1px;height:18px;background:#7890d8"></div>
<div style="left:941px;top:276px;width:18px;height:20px;background:#efefef"></div>
<div style="left:942px;top:283px;width:1px;height:13px;background:#a9a9a9"></div>
<div style="left:943px;top:283px;width:1px;height:13px;background:#c9c9c9"></div>
<div style="left:944px;top:282px;width:1px;height:14px;background:#a9a9a9"></div>
<div style="left:945px;top:282px;width:1px;height:14px;background:#c9c9c9"></div>
<div style="left:946px;top:282px;width:1px;height:14px;background:#a9a9a9"></div>
<div style="left:947px;top:282px;width:1px;height:14px;background:#c9c9c9"></div>
<div style="left:948px;top:281px;width:1px;height:15px;background:#a9a9a9"></div>
<div style="left:949px;top:280px;width:1px;height:16px;background:#c9c9c9"></div>
<div style="left:950px;top:280px;width:1px;height:16px;background:#a9a9a9"></div>
<div style="left:951px;top:280px;width:1px;height:16px;background:#c9c9c9"></div>
<div style="left:952px;top:279px;width:1px;height:17px;background:#a9a9a9"></div>
<div style="left:953px;top:279px;width:1px;height:17px;background:#c9c9c9"></div>
<div style="left:954px;top:279px;width:1px;height:17px;background:#a9a9a9"></div>
<div style="left:955px;top:279px;width:1px;height:17px;background:#c9c9c9"></div>
<div style="left:956px;top:279px;width:1px;height:17px;background:#a9a9a9"></div>
<div style="left:957px;top:278px;width:1px;height:18px;background:#c9c9c9"></div>
<div style="left:957px;top:278px;width:1px;height:18px;background:#7890d8"></div>
<div style="left:997px;top:276px;width:16px;height:20px;background:#efefef"></div>
<div style="left:998px;top:283px;width:1px;height:13px;background:#a9a9a9"></div>
<div style="left:999px;top:282px;width:1px;height:14px;background:#c9c9c9"></div>
<div style="left:1000px;top:282px;width:1px;height:14px;background:#7890d8"></div>
<div style="left:1001px;top:281px;width:1px;height:15px;background:#7890d8"></div>
<div style="left:1002px;top:281px;width:1px;height:15px;background:#a9a9a9"></div>
<div style="left:1003px;top:281px;width:1px;height:15px;background:#c9c9c9"></div>
<div style="left:1004px;top:281px;width:1px;height:15px;background:#ee4d5a"></div>
<div style="left:1005px;top:280px;width:1px;height:16px;background:#7890d8"></div>
<div style="left:1006px;top:280px;width:1px;height:16px;background:#a9a9a9"></div>
<div style="left:1007px;top:280px;width:1px;height:16px;background:#7890d8"></div>
<div style="left:1008px;top:279px;width:1px;height:17px;background:#a9a9a9"></div>
<div style="left:1009px;top:279px;width:1px;height:17px;background:#c9c9c9"></div>
<div style="left:1010px;top:278px;width:1px;height:18px;background:#a9a9a9"></div>
<div style="left:1011px;top:278px;width:1px;height:18px;background:#c9c9c9"></div>
<div style="left:1011px;top:278px;width:1px;height:18px;background:#7890d8"></div>
<div style="left:441px;top:276px;width:28px;height:20px;border:1px solid #c39a55;border-radius:4px;background:linear-gradient(#fee6bf,#fcd595 60%,#f9cd88)"></div>
<div class="t" style="left:446.73px;top:280px;font-size:11px;line-height:11px;color:#222;transform:scaleX(1.1272);">c...</div>
<div style="left:477px;top:276px;width:56px;height:20px;border:1px solid #c39a55;border-radius:4px;background:linear-gradient(#fee6bf,#fcd595 60%,#f9cd88)"></div>
<div class="t" style="left:481.95px;top:280px;font-size:11px;line-height:11px;color:#222;transform:scaleX(1.1251);">cuStre...</div>
<div style="left:549px;top:276px;width:38px;height:20px;border:1px solid #c39a55;border-radius:4px;background:linear-gradient(#fee6bf,#fcd595 60%,#f9cd88)"></div>
<div class="t" style="left:552.75px;top:280px;font-size:11px;line-height:11px;color:#222;transform:scaleX(1.0841);">cuS...</div>
<div style="left:603px;top:276px;width:38px;height:20px;border:1px solid #c39a55;border-radius:4px;background:linear-gradient(#fee6bf,#fcd595 60%,#f9cd88)"></div>
<div class="t" style="left:606.75px;top:280px;font-size:11px;line-height:11px;color:#222;transform:scaleX(1.0841);">cuS...</div>
<div style="left:655px;top:276px;width:37px;height:20px;border:1px solid #c39a55;border-radius:4px;background:linear-gradient(#fee6bf,#fcd595 60%,#f9cd88)"></div>
<div class="t" style="left:658.25px;top:280px;font-size:11px;line-height:11px;color:#222;transform:scaleX(1.0841);">cuS...</div>
<div style="left:705px;top:276px;width:36px;height:20px;border:1px solid #c39a55;border-radius:4px;background:linear-gradient(#fee6bf,#fcd595 60%,#f9cd88)"></div>
<div class="t" style="left:707.75px;top:280px;font-size:11px;line-height:11px;color:#222;transform:scaleX(1.0841);">cuS...</div>
<div style="left:753px;top:276px;width:38px;height:20px;border:1px solid #c39a55;border-radius:4px;background:linear-gradient(#fee6bf,#fcd595 60%,#f9cd88)"></div>
<div class="t" style="left:756.75px;top:280px;font-size:11px;line-height:11px;color:#222;transform:scaleX(1.0841);">cuS...</div>
<div style="left:807px;top:276px;width:38px;height:20px;border:1px solid #c39a55;border-radius:4px;background:linear-gradient(#fee6bf,#fcd595 60%,#f9cd88)"></div>
<div class="t" style="left:810.75px;top:280px;font-size:11px;line-height:11px;color:#222;transform:scaleX(1.0841);">cuS...</div>
<div style="left:857px;top:276px;width:36px;height:20px;border:1px solid #c39a55;border-radius:4px;background:linear-gradient(#fee6bf,#fcd595 60%,#f9cd88)"></div>
<div class="t" style="left:859.75px;top:280px;font-size:11px;line-height:11px;color:#222;transform:scaleX(1.0841);">cuS...</div>
<div style="left:905px;top:276px;width:38px;height:20px;border:1px solid #c39a55;border-radius:4px;background:linear-gradient(#fee6bf,#fcd595 60%,#f9cd88)"></div>
<div class="t" style="left:908.75px;top:280px;font-size:11px;line-height:11px;color:#222;transform:scaleX(1.0841);">cuS...</div>
<div style="left:959px;top:276px;width:38px;height:20px;border:1px solid #c39a55;border-radius:4px;background:linear-gradient(#fee6bf,#fcd595 60%,#f9cd88)"></div>
<div class="t" style="left:962.75px;top:280px;font-size:11px;line-height:11px;color:#222;transform:scaleX(1.0841);">cuS...</div>
<div style="left:1014px;top:276px;width:36px;height:20px;border:1px solid #c39a55;border-radius:4px;background:linear-gradient(#fee6bf,#fcd595 60%,#f9cd88)"></div>
<div class="t" style="left:1016.75px;top:280px;font-size:11px;line-height:11px;color:#222;transform:scaleX(1.0841);">cuS...</div>
<div style="left:335px;top:344px;width:14px;height:1px;background:#000"></div>
<div style="left:430px;top:346px;width:7px;height:25px;background:repeating-linear-gradient(to right,#efefef 0 2px,#fff 2px 4px)"></div>
<div style="left:469px;top:346px;width:8px;height:25px;background:#efefef"></div>
<div style="left:477px;top:346px;width:1px;height:25px;background:#fff"></div>
<div style="left:531px;top:346px;width:18px;height:25px;background:#efefef"></div>
<div style="left:539px;top:346px;width:1px;height:25px;background:#fff"></div>
<div style="left:587px;top:346px;width:16px;height:25px;background:#efefef"></div>
<div style="left:595px;top:346px;width:1px;height:25px;background:#fff"></div>
<div style="left:640px;top:346px;width:15px;height:25px;background:#efefef"></div>
<div style="left:648px;top:346px;width:1px;height:25px;background:#fff"></div>
<div style="left:691px;top:346px;width:14px;height:25px;background:#efefef"></div>
<div style="left:699px;top:346px;width:1px;height:25px;background:#fff"></div>
<div style="left:741px;top:346px;width:12px;height:25px;background:#efefef"></div>
<div style="left:749px;top:346px;width:1px;height:25px;background:#fff"></div>
<div style="left:789px;top:346px;width:18px;height:25px;background:#efefef"></div>
<div style="left:797px;top:346px;width:1px;height:25px;background:#fff"></div>
<div style="left:843px;top:346px;width:14px;height:25px;background:#efefef"></div>
<div style="left:851px;top:346px;width:1px;height:25px;background:#fff"></div>
<div style="left:893px;top:346px;width:12px;height:25px;background:#efefef"></div>
<div style="left:901px;top:346px;width:1px;height:25px;background:#fff"></div>
<div style="left:941px;top:346px;width:18px;height:25px;background:#efefef"></div>
<div style="left:949px;top:346px;width:1px;height:25px;background:#fff"></div>
<div style="left:995px;top:346px;width:18px;height:25px;background:#efefef"></div>
<div style="left:1003px;top:346px;width:1px;height:25px;background:#fff"></div>
<div style="left:442px;top:346px;width:27px;height:12px;background:#74b5ee"></div>
<div style="left:441px;top:349px;width:28px;height:9px;background:#74b5ee"></div>
<div style="left:469px;top:351px;width:2px;height:7px;background:#74b5ee"></div>
<div style="left:471px;top:354px;width:2px;height:4px;background:#74b5ee"></div>
<div style="left:473px;top:356px;width:2px;height:2px;background:#74b5ee"></div>
<div style="left:478px;top:346px;width:53px;height:12px;background:#74b5ee"></div>
<div style="left:477px;top:349px;width:54px;height:9px;background:#74b5ee"></div>
<div style="left:531px;top:351px;width:2px;height:7px;background:#74b5ee"></div>
<div style="left:533px;top:354px;width:2px;height:4px;background:#74b5ee"></div>
<div style="left:535px;top:356px;width:2px;height:2px;background:#74b5ee"></div>
<div style="left:550px;top:346px;width:37px;height:12px;background:#74b5ee"></div>
<div style="left:549px;top:349px;width:38px;height:9px;background:#74b5ee"></div>
<div style="left:587px;top:351px;width:2px;height:7px;background:#74b5ee"></div>
<div style="left:589px;top:354px;width:2px;height:4px;background:#74b5ee"></div>
<div style="left:591px;top:356px;width:2px;height:2px;background:#74b5ee"></div>
<div style="left:604px;top:346px;width:36px;height:12px;background:#74b5ee"></div>
<div style="left:603px;top:349px;width:37px;height:9px;background:#74b5ee"></div>
<div style="left:640px;top:351px;width:2px;height:7px;background:#74b5ee"></div>
<div style="left:642px;top:354px;width:2px;height:4px;background:#74b5ee"></div>
<div style="left:644px;top:356px;width:2px;height:2px;background:#74b5ee"></div>
<div style="left:656px;top:346px;width:35px;height:12px;background:#74b5ee"></div>
<div style="left:655px;top:349px;width:36px;height:9px;background:#74b5ee"></div>
<div style="left:691px;top:351px;width:2px;height:7px;background:#74b5ee"></div>
<div style="left:693px;top:354px;width:2px;height:4px;background:#74b5ee"></div>
<div style="left:695px;top:356px;width:2px;height:2px;background:#74b5ee"></div>
<div style="left:706px;top:346px;width:35px;height:12px;background:#74b5ee"></div>
<div style="left:705px;top:349px;width:36px;height:9px;background:#74b5ee"></div>
<div style="left:741px;top:351px;width:2px;height:7px;background:#74b5ee"></div>
<div style="left:743px;top:354px;width:2px;height:4px;background:#74b5ee"></div>
<div style="left:745px;top:356px;width:2px;height:2px;background:#74b5ee"></div>
<div style="left:754px;top:346px;width:35px;height:12px;background:#74b5ee"></div>
<div style="left:753px;top:349px;width:36px;height:9px;background:#74b5ee"></div>
<div style="left:789px;top:351px;width:2px;height:7px;background:#74b5ee"></div>
<div style="left:791px;top:354px;width:2px;height:4px;background:#74b5ee"></div>
<div style="left:793px;top:356px;width:2px;height:2px;background:#74b5ee"></div>
<div style="left:808px;top:346px;width:35px;height:12px;background:#74b5ee"></div>
<div style="left:807px;top:349px;width:36px;height:9px;background:#74b5ee"></div>
<div style="left:843px;top:351px;width:2px;height:7px;background:#74b5ee"></div>
<div style="left:845px;top:354px;width:2px;height:4px;background:#74b5ee"></div>
<div style="left:847px;top:356px;width:2px;height:2px;background:#74b5ee"></div>
<div style="left:858px;top:346px;width:35px;height:12px;background:#74b5ee"></div>
<div style="left:857px;top:349px;width:36px;height:9px;background:#74b5ee"></div>
<div style="left:893px;top:351px;width:2px;height:7px;background:#74b5ee"></div>
<div style="left:895px;top:354px;width:2px;height:4px;background:#74b5ee"></div>
<div style="left:897px;top:356px;width:2px;height:2px;background:#74b5ee"></div>
<div style="left:906px;top:346px;width:35px;height:12px;background:#74b5ee"></div>
<div style="left:905px;top:349px;width:36px;height:9px;background:#74b5ee"></div>
<div style="left:941px;top:351px;width:2px;height:7px;background:#74b5ee"></div>
<div style="left:943px;top:354px;width:2px;height:4px;background:#74b5ee"></div>
<div style="left:945px;top:356px;width:2px;height:2px;background:#74b5ee"></div>
<div style="left:960px;top:346px;width:35px;height:12px;background:#74b5ee"></div>
<div style="left:959px;top:349px;width:36px;height:9px;background:#74b5ee"></div>
<div style="left:995px;top:351px;width:2px;height:7px;background:#74b5ee"></div>
<div style="left:997px;top:354px;width:2px;height:4px;background:#74b5ee"></div>
<div style="left:999px;top:356px;width:2px;height:2px;background:#74b5ee"></div>
<div style="left:1014px;top:346px;width:35px;height:12px;background:#74b5ee"></div>
<div style="left:1013px;top:349px;width:36px;height:9px;background:#74b5ee"></div>
<div style="left:1049px;top:351px;width:2px;height:7px;background:#74b5ee"></div>
<div style="left:1051px;top:354px;width:2px;height:4px;background:#74b5ee"></div>
<div style="left:1053px;top:356px;width:2px;height:2px;background:#74b5ee"></div>
<div style="left:469px;top:346px;width:8px;height:25px;background:#ffffff"></div>
<div style="left:469px;top:346px;width:8px;height:25px;background:#fff"></div>
<div style="left:470px;top:346px;width:2px;height:25px;background:#efefef"></div>
<div style="left:474px;top:346px;width:2px;height:25px;background:#efefef"></div>
<div style="left:463px;top:358px;width:2px;height:13px;background:#20c896"></div>
<div style="left:463px;top:358px;width:4px;height:2px;background:#20c896"></div>
<div style="left:474px;top:358px;width:3px;height:2px;background:#20c896"></div>
<div style="left:491px;top:358px;width:3px;height:13px;background:#20c896"></div>
<div style="left:489px;top:358px;width:5px;height:3px;background:#20c896"></div>
<div style="left:541px;top:358px;width:6px;height:2px;background:#20c896"></div>
<div style="left:547px;top:358px;width:2px;height:3px;background:#20c896"></div>
<div style="left:597px;top:358px;width:5px;height:2px;background:#20c896"></div>
<div style="left:650px;top:358px;width:4px;height:2px;background:#20c896"></div>
<div style="left:700px;top:358px;width:5px;height:2px;background:#20c896"></div>
<div style="left:748px;top:358px;width:4px;height:2px;background:#20c896"></div>
<div style="left:798px;top:358px;width:2px;height:2px;background:#20c896"></div>
<div style="left:801px;top:358px;width:4px;height:3px;background:#20c896"></div>
<div style="left:850px;top:358px;width:5px;height:2px;background:#20c896"></div>
<div style="left:899px;top:358px;width:4px;height:2px;background:#20c896"></div>
<div style="left:948px;top:358px;width:4px;height:2px;background:#20c896"></div>
<div style="left:1003px;top:358px;width:5px;height:2px;background:#20c896"></div>
<div style="left:469px;top:396px;width:8px;height:20px;background:#f1f1f1"></div>
<div style="left:469px;top:414px;width:1px;height:2px;background:#7b96dc"></div>
<div style="left:471px;top:412px;width:1px;height:4px;background:#7b96dc"></div>
<div style="left:473px;top:413px;width:1px;height:3px;background:#7b96dc"></div>
<div style="left:475px;top:414px;width:1px;height:2px;background:#7b96dc"></div>
<div style="left:531px;top:396px;width:8px;height:20px;background:#f1f1f1"></div>
<div style="left:531px;top:414px;width:1px;height:2px;background:#7b96dc"></div>
<div style="left:533px;top:412px;width:1px;height:4px;background:#7b96dc"></div>
<div style="left:535px;top:413px;width:1px;height:3px;background:#7b96dc"></div>
<div style="left:537px;top:414px;width:1px;height:2px;background:#7b96dc"></div>
<div style="left:589px;top:396px;width:8px;height:20px;background:#f1f1f1"></div>
<div style="left:589px;top:414px;width:1px;height:2px;background:#7b96dc"></div>
<div style="left:591px;top:412px;width:1px;height:4px;background:#7b96dc"></div>
<div style="left:593px;top:413px;width:1px;height:3px;background:#7b96dc"></div>
<div style="left:595px;top:414px;width:1px;height:2px;background:#7b96dc"></div>
<div style="left:641px;top:396px;width:8px;height:20px;background:#f1f1f1"></div>
<div style="left:641px;top:414px;width:1px;height:2px;background:#7b96dc"></div>
<div style="left:643px;top:412px;width:1px;height:4px;background:#7b96dc"></div>
<div style="left:645px;top:413px;width:1px;height:3px;background:#7b96dc"></div>
<div style="left:647px;top:414px;width:1px;height:2px;background:#7b96dc"></div>
<div style="left:693px;top:396px;width:8px;height:20px;background:#f1f1f1"></div>
<div style="left:693px;top:414px;width:1px;height:2px;background:#7b96dc"></div>
<div style="left:695px;top:412px;width:1px;height:4px;background:#7b96dc"></div>
<div style="left:697px;top:413px;width:1px;height:3px;background:#7b96dc"></div>
<div style="left:699px;top:414px;width:1px;height:2px;background:#7b96dc"></div>
<div style="left:742px;top:396px;width:8px;height:20px;background:#f1f1f1"></div>
<div style="left:742px;top:414px;width:1px;height:2px;background:#7b96dc"></div>
<div style="left:744px;top:412px;width:1px;height:4px;background:#7b96dc"></div>
<div style="left:746px;top:413px;width:1px;height:3px;background:#7b96dc"></div>
<div style="left:748px;top:414px;width:1px;height:2px;background:#7b96dc"></div>
<div style="left:790px;top:396px;width:8px;height:20px;background:#f1f1f1"></div>
<div style="left:790px;top:414px;width:1px;height:2px;background:#7b96dc"></div>
<div style="left:792px;top:412px;width:1px;height:4px;background:#7b96dc"></div>
<div style="left:794px;top:413px;width:1px;height:3px;background:#7b96dc"></div>
<div style="left:796px;top:414px;width:1px;height:2px;background:#7b96dc"></div>
<div style="left:844px;top:396px;width:8px;height:20px;background:#f1f1f1"></div>
<div style="left:844px;top:414px;width:1px;height:2px;background:#7b96dc"></div>
<div style="left:846px;top:412px;width:1px;height:4px;background:#7b96dc"></div>
<div style="left:848px;top:413px;width:1px;height:3px;background:#7b96dc"></div>
<div style="left:850px;top:414px;width:1px;height:2px;background:#7b96dc"></div>
<div style="left:894px;top:396px;width:8px;height:20px;background:#f1f1f1"></div>
<div style="left:894px;top:414px;width:1px;height:2px;background:#7b96dc"></div>
<div style="left:896px;top:412px;width:1px;height:4px;background:#7b96dc"></div>
<div style="left:898px;top:413px;width:1px;height:3px;background:#7b96dc"></div>
<div style="left:900px;top:414px;width:1px;height:2px;background:#7b96dc"></div>
<div style="left:942px;top:396px;width:8px;height:20px;background:#f1f1f1"></div>
<div style="left:942px;top:414px;width:1px;height:2px;background:#7b96dc"></div>
<div style="left:944px;top:412px;width:1px;height:4px;background:#7b96dc"></div>
<div style="left:946px;top:413px;width:1px;height:3px;background:#7b96dc"></div>
<div style="left:948px;top:414px;width:1px;height:2px;background:#7b96dc"></div>
<div style="left:996px;top:396px;width:8px;height:20px;background:#f1f1f1"></div>
<div style="left:996px;top:414px;width:1px;height:2px;background:#7b96dc"></div>
<div style="left:998px;top:412px;width:1px;height:4px;background:#7b96dc"></div>
<div style="left:1000px;top:413px;width:1px;height:3px;background:#7b96dc"></div>
<div style="left:1002px;top:414px;width:1px;height:2px;background:#7b96dc"></div>
<div style="left:1050px;top:396px;width:8px;height:20px;background:#f1f1f1"></div>
<div style="left:1050px;top:414px;width:1px;height:2px;background:#7b96dc"></div>
<div style="left:1052px;top:412px;width:1px;height:4px;background:#7b96dc"></div>
<div style="left:1054px;top:413px;width:1px;height:3px;background:#7b96dc"></div>
<div style="left:1056px;top:414px;width:1px;height:2px;background:#7b96dc"></div>
<div style="left:535px;top:396px;width:6px;height:20px;background:#f1f1f1"></div>
<div style="left:441px;top:396px;width:28px;height:20px;border:1px solid #3c5591;border-radius:4px;background:linear-gradient(#6683cf,#7d9df2 55%,#6e8bd9)"></div>
<div class="t" style="left:443.51px;top:400px;font-size:11px;line-height:11px;color:#222;transform:scaleX(1.1054);">se...</div>
<div style="left:477px;top:396px;width:54px;height:20px;border:1px solid #3c5591;border-radius:4px;background:linear-gradient(#6683cf,#7d9df2 55%,#6e8bd9)"></div>
<div class="t" style="left:480.03px;top:400px;font-size:11px;line-height:11px;color:#222;transform:scaleX(1.1363);">compu...</div>
<div style="left:549px;top:396px;width:40px;height:20px;border:1px solid #3c5591;border-radius:4px;background:linear-gradient(#6683cf,#7d9df2 55%,#6e8bd9)"></div>
<div class="t" style="left:552.01px;top:400px;font-size:11px;line-height:11px;color:#222;transform:scaleX(1.1345);">com...</div>
<div style="left:603px;top:396px;width:38px;height:20px;border:1px solid #3c5591;border-radius:4px;background:linear-gradient(#6683cf,#7d9df2 55%,#6e8bd9)"></div>
<div class="t" style="left:610.37px;top:400px;font-size:11px;line-height:11px;color:#222;transform:scaleX(1.1188);">co...</div>
<div style="left:655px;top:396px;width:38px;height:20px;border:1px solid #3c5591;border-radius:4px;background:linear-gradient(#6683cf,#7d9df2 55%,#6e8bd9)"></div>
<div class="t" style="left:662.37px;top:400px;font-size:11px;line-height:11px;color:#222;transform:scaleX(1.1188);">co...</div>
<div style="left:705px;top:396px;width:37px;height:20px;border:1px solid #3c5591;border-radius:4px;background:linear-gradient(#6683cf,#7d9df2 55%,#6e8bd9)"></div>
<div class="t" style="left:711.87px;top:400px;font-size:11px;line-height:11px;color:#222;transform:scaleX(1.1188);">co...</div>
<div style="left:753px;top:396px;width:37px;height:20px;border:1px solid #3c5591;border-radius:4px;background:linear-gradient(#6683cf,#7d9df2 55%,#6e8bd9)"></div>
<div class="t" style="left:759.87px;top:400px;font-size:11px;line-height:11px;color:#222;transform:scaleX(1.1188);">co...</div>
<div style="left:807px;top:396px;width:37px;height:20px;border:1px solid #3c5591;border-radius:4px;background:linear-gradient(#6683cf,#7d9df2 55%,#6e8bd9)"></div>
<div class="t" style="left:813.87px;top:400px;font-size:11px;line-height:11px;color:#222;transform:scaleX(1.1188);">co...</div>
<div style="left:857px;top:396px;width:37px;height:20px;border:1px solid #3c5591;border-radius:4px;background:linear-gradient(#6683cf,#7d9df2 55%,#6e8bd9)"></div>
<div class="t" style="left:858.51px;top:400px;font-size:11px;line-height:11px;color:#222;transform:scaleX(1.1345);">com...</div>
<div style="left:905px;top:396px;width:37px;height:20px;border:1px solid #3c5591;border-radius:4px;background:linear-gradient(#6683cf,#7d9df2 55%,#6e8bd9)"></div>
<div class="t" style="left:911.87px;top:400px;font-size:11px;line-height:11px;color:#222;transform:scaleX(1.1188);">co...</div>
<div style="left:959px;top:396px;width:37px;height:20px;border:1px solid #3c5591;border-radius:4px;background:linear-gradient(#6683cf,#7d9df2 55%,#6e8bd9)"></div>
<div class="t" style="left:965.87px;top:400px;font-size:11px;line-height:11px;color:#222;transform:scaleX(1.1188);">co...</div>
<div style="left:1013px;top:396px;width:37px;height:20px;border:1px solid #3c5591;border-radius:4px;background:linear-gradient(#6683cf,#7d9df2 55%,#6e8bd9)"></div>
<div class="t" style="left:1019.87px;top:400px;font-size:11px;line-height:11px;color:#222;transform:scaleX(1.1188);">co...</div>
<div style="left:477px;top:419px;width:54px;height:20px;border:1px solid #3c5591;border-radius:4px;background:linear-gradient(#6683cf,#7d9df2 55%,#6e8bd9)"></div>
<div class="t" style="left:480.03px;top:423px;font-size:11px;line-height:11px;color:#222;transform:scaleX(1.1363);">compu...</div>
<div style="left:549px;top:419px;width:40px;height:20px;border:1px solid #3c5591;border-radius:4px;background:linear-gradient(#6683cf,#7d9df2 55%,#6e8bd9)"></div>
<div class="t" style="left:552.01px;top:423px;font-size:11px;line-height:11px;color:#222;transform:scaleX(1.1345);">com...</div>
<div style="left:603px;top:419px;width:38px;height:20px;border:1px solid #3c5591;border-radius:4px;background:linear-gradient(#6683cf,#7d9df2 55%,#6e8bd9)"></div>
<div class="t" style="left:610.37px;top:423px;font-size:11px;line-height:11px;color:#222;transform:scaleX(1.1188);">co...</div>
<div style="left:959px;top:419px;width:37px;height:20px;border:1px solid #3c5591;border-radius:4px;background:linear-gradient(#6683cf,#7d9df2 55%,#6e8bd9)"></div>
<div class="t" style="left:965.87px;top:423px;font-size:11px;line-height:11px;color:#222;transform:scaleX(1.1188);">co...</div>
<div style="left:1013px;top:419px;width:37px;height:20px;border:1px solid #3c5591;border-radius:4px;background:linear-gradient(#6683cf,#7d9df2 55%,#6e8bd9)"></div>
<div class="t" style="left:1019.87px;top:423px;font-size:11px;line-height:11px;color:#222;transform:scaleX(1.1188);">co...</div>
<div style="left:655px;top:442px;width:38px;height:20px;border:1px solid #3c5591;border-radius:4px;background:linear-gradient(#6683cf,#7d9df2 55%,#6e8bd9)"></div>
<div class="t" style="left:662.37px;top:446px;font-size:11px;line-height:11px;color:#222;transform:scaleX(1.1188);">co...</div>
<div style="left:705px;top:442px;width:37px;height:20px;border:1px solid #3c5591;border-radius:4px;background:linear-gradient(#6683cf,#7d9df2 55%,#6e8bd9)"></div>
<div class="t" style="left:711.87px;top:446px;font-size:11px;line-height:11px;color:#222;transform:scaleX(1.1188);">co...</div>
<div style="left:753px;top:442px;width:37px;height:20px;border:1px solid #3c5591;border-radius:4px;background:linear-gradient(#6683cf,#7d9df2 55%,#6e8bd9)"></div>
<div class="t" style="left:759.87px;top:446px;font-size:11px;line-height:11px;color:#222;transform:scaleX(1.1188);">co...</div>
<div style="left:807px;top:442px;width:37px;height:20px;border:1px solid #3c5591;border-radius:4px;background:linear-gradient(#6683cf,#7d9df2 55%,#6e8bd9)"></div>
<div class="t" style="left:813.87px;top:446px;font-size:11px;line-height:11px;color:#222;transform:scaleX(1.1188);">co...</div>
<div style="left:857px;top:442px;width:37px;height:20px;border:1px solid #3c5591;border-radius:4px;background:linear-gradient(#6683cf,#7d9df2 55%,#6e8bd9)"></div>
<div class="t" style="left:858.51px;top:446px;font-size:11px;line-height:11px;color:#222;transform:scaleX(1.1345);">com...</div>
<div style="left:905px;top:442px;width:37px;height:20px;border:1px solid #3c5591;border-radius:4px;background:linear-gradient(#6683cf,#7d9df2 55%,#6e8bd9)"></div>
<div class="t" style="left:911.87px;top:446px;font-size:11px;line-height:11px;color:#222;transform:scaleX(1.1188);">co...</div>
<div style="left:949px;top:482px;width:2px;height:3px;background:#6080d0"></div>
<div style="left:1001px;top:483px;width:4px;height:2px;background:#6080d0"></div>
<div style="left:949px;top:465px;width:1px;height:17px;background:#e8e8e8"></div>
<div style="left:443px;top:487px;width:24px;height:24px;background:#74b5ee"></div>
<div style="left:441px;top:503px;width:2px;height:8px;background:#74b5ee"></div>
<div style="left:467px;top:496px;width:2px;height:15px;background:#74b5ee"></div>
<div style="left:791px;top:487px;width:6px;height:24px;background:#ececec"></div>
<div style="left:791px;top:507px;width:6px;height:4px;background:#74b5ee"></div>
<div style="left:801px;top:487px;width:2px;height:24px;background:#ececec"></div>
<div style="left:801px;top:507px;width:2px;height:4px;background:#74b5ee"></div>
<div style="left:847px;top:487px;width:6px;height:24px;background:#ececec"></div>
<div style="left:847px;top:507px;width:6px;height:4px;background:#74b5ee"></div>
<div style="left:895px;top:487px;width:6px;height:24px;background:#ececec"></div>
<div style="left:895px;top:507px;width:6px;height:4px;background:#74b5ee"></div>
<div style="left:943px;top:487px;width:3px;height:24px;background:#ececec"></div>
<div style="left:943px;top:507px;width:3px;height:4px;background:#74b5ee"></div>
<div style="left:952px;top:487px;width:2px;height:24px;background:#ececec"></div>
<div style="left:952px;top:507px;width:2px;height:4px;background:#74b5ee"></div>
<div style="left:997px;top:487px;width:5px;height:24px;background:#ececec"></div>
<div style="left:997px;top:507px;width:5px;height:4px;background:#74b5ee"></div>
<div style="left:1007px;top:487px;width:2px;height:24px;background:#ececec"></div>
<div style="left:1007px;top:507px;width:2px;height:4px;background:#74b5ee"></div>
<div style="left:531px;top:487px;width:4px;height:24px;background:#ececec"></div>
<div style="left:588px;top:487px;width:4px;height:24px;background:#ececec"></div>
<div style="left:641px;top:487px;width:3px;height:24px;background:#ececec"></div>
<div style="left:429px;top:512px;width:3px;height:24px;background:#eeeeee"></div>
<div style="left:429px;top:531px;width:2px;height:5px;background:#20c896"></div>
<div style="left:435px;top:512px;width:3px;height:24px;background:#eeeeee"></div>
<div style="left:435px;top:534px;width:2px;height:2px;background:#20c896"></div>
<div style="left:473px;top:512px;width:3px;height:24px;background:#eeeeee"></div>
<div style="left:473px;top:533px;width:2px;height:3px;background:#20c896"></div>
<div style="left:475px;top:512px;width:3px;height:24px;background:#eeeeee"></div>
<div style="left:475px;top:530px;width:2px;height:6px;background:#20c896"></div>
<div style="left:749px;top:512px;width:4px;height:24px;background:#eeeeee"></div>
<div style="left:749px;top:530px;width:3px;height:6px;background:#20c896"></div>
<div style="left:803px;top:512px;width:3px;height:24px;background:#eeeeee"></div>
<div style="left:803px;top:529px;width:2px;height:7px;background:#20c896"></div>
<div style="left:805px;top:512px;width:3px;height:24px;background:#eeeeee"></div>
<div style="left:805px;top:532px;width:2px;height:4px;background:#20c896"></div>
<div style="left:853px;top:512px;width:4px;height:24px;background:#eeeeee"></div>
<div style="left:853px;top:526px;width:3px;height:10px;background:#20c896"></div>
<div style="left:901px;top:512px;width:5px;height:24px;background:#eeeeee"></div>
<div style="left:901px;top:530px;width:4px;height:6px;background:#20c896"></div>
<div style="left:951px;top:512px;width:3px;height:24px;background:#eeeeee"></div>
<div style="left:951px;top:526px;width:2px;height:10px;background:#20c896"></div>
<div style="left:955px;top:512px;width:4px;height:24px;background:#eeeeee"></div>
<div style="left:955px;top:532px;width:3px;height:4px;background:#20c896"></div>
<div style="left:1004px;top:512px;width:4px;height:24px;background:#eeeeee"></div>
<div style="left:1004px;top:531px;width:3px;height:5px;background:#20c896"></div>
<div style="left:1009px;top:512px;width:3px;height:24px;background:#eeeeee"></div>
<div style="left:1009px;top:528px;width:2px;height:8px;background:#20c896"></div>
<div style="left:300px;top:538px;width:730px;height:20px;border:1px solid #4a4a4a;border-radius:4px;background:linear-gradient(#707070,#919191 15%,#b3b3b3 50%,#acacac 70%,#909090 90%,#666)"></div>
<div style="left:313px;top:538px;width:18px;height:20px;background:linear-gradient(to right,rgba(255,255,255,0.95),rgba(255,255,255,0))"></div>
<div style="left:313px;top:559px;width:708px;height:6px;background:#a9a9a9"></div>
</div>
<div style="left:500px;top:61px;width:1px;height:610px;background:repeating-linear-gradient(#9a9a9a 0 1px,transparent 1px 3px)"></div>
<div style="left:35px;top:412px;width:312px;height:33px;border:2px solid #14f014;box-shadow:0 2px 3px rgba(0,0,0,0.25), inset 0 2px 3px rgba(0,0,0,0.18)"></div>
<div style="left:18px;top:671px;width:295px;height:14px;background:#efefef"></div>
<div style="left:313px;top:671px;width:14px;height:14px;background:linear-gradient(#fafafa,#ececec)"></div>
<div style="left:317px;top:675px;width:0;height:0;border-top:4px solid transparent;border-bottom:4px solid transparent;border-right:5px solid #555"></div>
<div style="left:326px;top:671px;width:695px;height:14px;background:#e3e3e3;border-left:1px solid #d0d0d0"></div>
<div style="left:17px;top:685px;width:1004px;height:4px;background:#bfbfbf"></div>
<div style="left:17px;top:695px;width:126px;height:23px;border:1px solid #b2b2b2;border-radius:3px;background:linear-gradient(#fcfcfc,#ededed)"></div>
<div class="t" style="left:22.00px;top:701px;font-size:12px;line-height:12px;color:#111;transform:scaleX(1.1120);">Events View</div>
<div style="left:127px;top:705px;width:0;height:0;border-left:4px solid transparent;border-right:4px solid transparent;border-top:4px solid #555"></div>
<div style="left:502px;top:445px;width:247px;height:261px;background:#ffffdc;border:1px solid #000;box-shadow:-4px 6px 14px 1px rgba(0,0,0,0.2)"></div>
<div style="left:503px;top:495px;width:140px;height:12px;background:linear-gradient(#c8f9bc,#b6f5a4)"></div>
<div style="left:503px;top:509px;width:156px;height:14px;background:linear-gradient(#c8f9bc,#b6f5a4)"></div>
<div style="left:659px;top:514px;width:10px;height:1px;background:#c8f5b8"></div>
<div class="t" style="left:506.00px;top:450px;font-size:12px;line-height:12px;color:#000;font-weight:bold;transform:scaleX(1.1462);">compute_tendencies_x_244_gpu</div>
<div class="t" style="left:506.00px;top:465px;font-size:12px;line-height:12px;color:#000;transform:scaleX(1.1244);">Begins: 0.250312s</div>
<div class="t" style="left:506.00px;top:480px;font-size:12px;line-height:12px;color:#000;transform:scaleX(1.1365);">Ends: 0.250671s (+358.559 µs)</div>
<div class="t" style="left:506.00px;top:495px;font-size:12px;line-height:12px;color:#1c3a1c;transform:scaleX(1.2605);">grid:  &lt;&lt;&lt;20, 1, 1&gt;&gt;&gt;</div>
<div class="t" style="left:506.00px;top:510px;font-size:12px;line-height:12px;color:#1c3a1c;transform:scaleX(1.2432);">block: &lt;&lt;&lt;128, 1, 1&gt;&gt;&gt;</div>
<div class="t" style="left:506.00px;top:525px;font-size:12px;line-height:12px;color:#000;transform:scaleX(1.1188);">Launch Type: Regular</div>
<div class="t" style="left:506.00px;top:540px;font-size:12px;line-height:12px;color:#000;transform:scaleX(1.1313);">Static Shared Memory: 0 bytes</div>
<div class="t" style="left:506.00px;top:555px;font-size:12px;line-height:12px;color:#000;transform:scaleX(1.1305);">Dynamic Shared Memory: 96 bytes</div>
<div class="t" style="left:506.00px;top:570px;font-size:12px;line-height:12px;color:#000;transform:scaleX(1.1111);">Registers Per Thread: 58</div>
<div class="t" style="left:506.00px;top:585px;font-size:12px;line-height:12px;color:#000;transform:scaleX(1.1187);">Local Memory Per Thread: 0 bytes</div>
<div class="t" style="left:506.00px;top:600px;font-size:12px;line-height:12px;color:#000;transform:scaleX(1.1416);">Local Memory Total: 191,365,120 bytes</div>
<div class="t" style="left:506.00px;top:615px;font-size:12px;line-height:12px;color:#000;transform:scaleX(1.1343);">Shared Memory executed: 8,192 bytes</div>
<div class="t" style="left:506.00px;top:630px;font-size:12px;line-height:12px;color:#000;transform:scaleX(1.1054);">Shared Memory Bank Size: 4 B</div>
<div class="t" style="left:506.00px;top:645px;font-size:12px;line-height:12px;color:#000;transform:scaleX(1.1284);">Theoretical occupancy: 50 %</div>
<div class="t" style="left:506.00px;top:660px;font-size:12px;line-height:12px;color:#000;transform:scaleX(1.1426);">Launched from thread: 26207</div>
<div class="t" style="left:506.00px;top:675px;font-size:12px;line-height:12px;color:#000;transform:scaleX(1.1412);">Latency:    11.363 µs</div>
<div class="t" style="left:506.00px;top:690px;font-size:12px;line-height:12px;color:#000;transform:scaleX(1.1310);">Correlation ID: 50</div>
<svg style="position:absolute;left:497px;top:426px" width="16" height="22"><path d="M2.5 2.5 L2.5 18 L6.3 14.4 L9 20.3 L11.6 19.1 L9 13.3 L14 13.3 Z" fill="#fff" stroke="#000" stroke-width="1.2" stroke-linejoin="round"/></svg>
<svg style="position:absolute;left:560px;top:676px" width="12" height="9"><path d="M1 4.5 L11 4.5" stroke="#000" stroke-width="1.2"/><path d="M0.5 4.5 L4 1.5 L4 7.5 Z" fill="#000"/></svg>
</body></html>
